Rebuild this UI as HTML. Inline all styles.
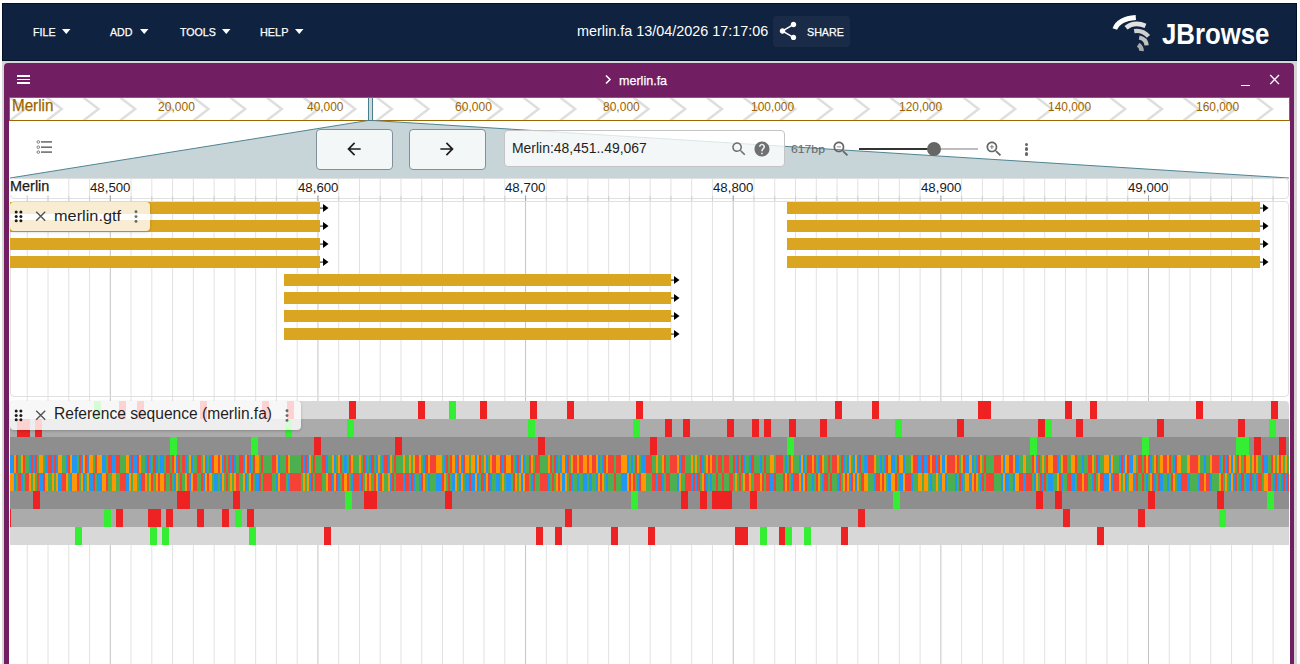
<!DOCTYPE html><html><head><meta charset='utf-8'><style>
*{box-sizing:border-box;margin:0;padding:0}
html,body{width:1300px;height:664px;overflow:hidden;background:#fff;font-family:"Liberation Sans", sans-serif;position:relative}
.a{position:absolute}
.t{position:absolute;white-space:nowrap;line-height:1}
</style></head><body>
<div class="a" style="left:2px;top:3px;width:1295px;height:661px;background:#d6d6d6"></div>
<div class="a" style="left:2px;top:3px;width:1295px;height:58px;background:#0f2340;border:1px solid #03122c"></div>
<div class="t" style="left:32.94px;top:27px;font-size:11.2px;color:#fff;transform:scaleX(0.9557);transform-origin:0 0;-webkit-text-stroke:0.25px currentColor;">FILE</div>
<div class="t" style="left:109.90px;top:27px;font-size:11.2px;color:#fff;transform:scaleX(0.9532);transform-origin:0 0;-webkit-text-stroke:0.25px currentColor;">ADD</div>
<div class="t" style="left:180.09px;top:27px;font-size:11.2px;color:#fff;transform:scaleX(0.9497);transform-origin:0 0;-webkit-text-stroke:0.25px currentColor;">TOOLS</div>
<div class="t" style="left:260.03px;top:27px;font-size:11.2px;color:#fff;transform:scaleX(0.9717);transform-origin:0 0;-webkit-text-stroke:0.25px currentColor;">HELP</div>
<svg class="a" style="left:62px;top:28.5px" width="9" height="6"><path d="M0 0L8.5 0L4.25 5z" fill="#fff"/></svg>
<svg class="a" style="left:139.5px;top:28.5px" width="9" height="6"><path d="M0 0L8.5 0L4.25 5z" fill="#fff"/></svg>
<svg class="a" style="left:222.2px;top:28.5px" width="9" height="6"><path d="M0 0L8.5 0L4.25 5z" fill="#fff"/></svg>
<svg class="a" style="left:295.4px;top:28.5px" width="9" height="6"><path d="M0 0L8.5 0L4.25 5z" fill="#fff"/></svg>
<div class="t" style="left:576.79px;top:24px;font-size:14.8px;color:#fff;transform:scaleX(0.9727);transform-origin:0 0;">merlin.fa 13/04/2026 17:17:06</div>
<div class="a" style="left:773px;top:16px;width:77px;height:31px;background:#1a2b48;border-radius:4px"></div>
<svg class="a" style="left:777px;top:20px" width="22" height="22" viewBox="0 0 24 24"><path fill="#fff" d="M18 16.08c-.76 0-1.44.3-1.96.77L8.91 12.7c.05-.23.09-.46.09-.7s-.04-.47-.09-.7l7.05-4.11c.54.5 1.25.81 2.04.81 1.66 0 3-1.34 3-3s-1.34-3-3-3-3 1.34-3 3c0 .24.04.47.09.7L8.04 9.81C7.5 9.31 6.79 9 6 9c-1.66 0-3 1.34-3 3s1.34 3 3 3c.79 0 1.5-.31 2.04-.81l7.12 4.16c-.05.21-.08.43-.08.65 0 1.61 1.31 2.92 2.92 2.92 1.61 0 2.92-1.31 2.92-2.92s-1.31-2.92-2.92-2.92z"/></svg>
<div class="t" style="left:807.36px;top:27px;font-size:11.2px;color:#fff;transform:scaleX(0.9566);transform-origin:0 0;-webkit-text-stroke:0.25px currentColor;">SHARE</div>
<svg class="a" style="left:1105px;top:10px" width="60" height="45" viewBox="1105 10 60 45"><path d="M1114.8 29Q1118.7 18.75 1135.8 17.5" stroke="#fff" stroke-width="4.8" fill="none"/><path d="M1126 27.8Q1134.25 21.2 1145.5 25.8" stroke="#e2e2e2" stroke-width="4.6" fill="none"/><path d="M1134.2 31.1Q1142.6 29.7 1148.5 36.4" stroke="#d0d0d0" stroke-width="4.2" fill="none"/><path d="M1139.2 37.5Q1146.1 38.65 1146.6 45.4" stroke="#c2c2c2" stroke-width="4.3" fill="none"/><path d="M1138.2 44.7Q1141.75 47.2 1141.5 51" stroke="#a8a8a8" stroke-width="4.5" fill="none"/></svg>
<div class="t" style="left:1161.98px;top:19px;font-size:29.3px;color:#fff;font-weight:bold;transform:scaleX(0.8794);transform-origin:0 0;">JBrowse</div>
<div class="a" style="left:4px;top:63px;width:1290px;height:610px;background:#721e63;border-radius:4px 4px 0 0"></div>
<div class="a" style="left:17px;top:75.15px;width:13px;height:1.5px;background:#fff"></div>
<div class="a" style="left:17px;top:78.75px;width:13px;height:1.5px;background:#fff"></div>
<div class="a" style="left:17px;top:82.35px;width:13px;height:1.5px;background:#fff"></div>
<svg class="a" style="left:604px;top:74px" width="9" height="11" viewBox="0 0 9 11"><path d="M2 1.5L6 5.5L2 9.5" stroke="#fff" stroke-width="1.6" fill="none"/></svg>
<div class="t" style="left:618.52px;top:74px;font-size:13.6px;color:#fff;transform:scaleX(0.9225);transform-origin:0 0;-webkit-text-stroke:0.25px currentColor;">merlin.fa</div>
<div class="a" style="left:1241px;top:84.7px;width:9px;height:1.6px;background:#fff"></div>
<svg class="a" style="left:1268px;top:73px" width="13" height="13" viewBox="0 0 13 13"><path d="M2.2 2L11 11.1M11 2L2.2 11.1" stroke="#fff" stroke-width="1.35"/></svg>
<div class="a" style="left:9px;top:121px;width:1281px;height:560px;background:#fff"></div>
<svg class="a" style="left:9px;top:97px" width="1281" height="24" viewBox="9 97 1281 24"><rect x="9" y="97" width="1281" height="24" fill="#fff"/><path d="M-26.5 97.5L-11.5 109L-26.5 120.5" stroke="#dedede" stroke-width="2.5" fill="none"/><path d="M10.1 97.5L25.1 109L10.1 120.5" stroke="#dedede" stroke-width="2.5" fill="none"/><path d="M46.8 97.5L61.8 109L46.8 120.5" stroke="#dedede" stroke-width="2.5" fill="none"/><path d="M83.5 97.5L98.5 109L83.5 120.5" stroke="#dedede" stroke-width="2.5" fill="none"/><path d="M120.2 97.5L135.2 109L120.2 120.5" stroke="#dedede" stroke-width="2.5" fill="none"/><path d="M156.8 97.5L171.8 109L156.8 120.5" stroke="#dedede" stroke-width="2.5" fill="none"/><path d="M193.5 97.5L208.5 109L193.5 120.5" stroke="#dedede" stroke-width="2.5" fill="none"/><path d="M230.2 97.5L245.2 109L230.2 120.5" stroke="#dedede" stroke-width="2.5" fill="none"/><path d="M266.8 97.5L281.8 109L266.8 120.5" stroke="#dedede" stroke-width="2.5" fill="none"/><path d="M303.5 97.5L318.5 109L303.5 120.5" stroke="#dedede" stroke-width="2.5" fill="none"/><path d="M340.2 97.5L355.2 109L340.2 120.5" stroke="#dedede" stroke-width="2.5" fill="none"/><path d="M376.9 97.5L391.9 109L376.9 120.5" stroke="#dedede" stroke-width="2.5" fill="none"/><path d="M413.5 97.5L428.5 109L413.5 120.5" stroke="#dedede" stroke-width="2.5" fill="none"/><path d="M450.2 97.5L465.2 109L450.2 120.5" stroke="#dedede" stroke-width="2.5" fill="none"/><path d="M486.9 97.5L501.9 109L486.9 120.5" stroke="#dedede" stroke-width="2.5" fill="none"/><path d="M523.5 97.5L538.5 109L523.5 120.5" stroke="#dedede" stroke-width="2.5" fill="none"/><path d="M560.2 97.5L575.2 109L560.2 120.5" stroke="#dedede" stroke-width="2.5" fill="none"/><path d="M596.9 97.5L611.9 109L596.9 120.5" stroke="#dedede" stroke-width="2.5" fill="none"/><path d="M633.5 97.5L648.5 109L633.5 120.5" stroke="#dedede" stroke-width="2.5" fill="none"/><path d="M670.2 97.5L685.2 109L670.2 120.5" stroke="#dedede" stroke-width="2.5" fill="none"/><path d="M706.9 97.5L721.9 109L706.9 120.5" stroke="#dedede" stroke-width="2.5" fill="none"/><path d="M743.6 97.5L758.6 109L743.6 120.5" stroke="#dedede" stroke-width="2.5" fill="none"/><path d="M780.2 97.5L795.2 109L780.2 120.5" stroke="#dedede" stroke-width="2.5" fill="none"/><path d="M816.9 97.5L831.9 109L816.9 120.5" stroke="#dedede" stroke-width="2.5" fill="none"/><path d="M853.6 97.5L868.6 109L853.6 120.5" stroke="#dedede" stroke-width="2.5" fill="none"/><path d="M890.2 97.5L905.2 109L890.2 120.5" stroke="#dedede" stroke-width="2.5" fill="none"/><path d="M926.9 97.5L941.9 109L926.9 120.5" stroke="#dedede" stroke-width="2.5" fill="none"/><path d="M963.6 97.5L978.6 109L963.6 120.5" stroke="#dedede" stroke-width="2.5" fill="none"/><path d="M1000.2 97.5L1015.2 109L1000.2 120.5" stroke="#dedede" stroke-width="2.5" fill="none"/><path d="M1036.9 97.5L1051.9 109L1036.9 120.5" stroke="#dedede" stroke-width="2.5" fill="none"/><path d="M1073.6 97.5L1088.6 109L1073.6 120.5" stroke="#dedede" stroke-width="2.5" fill="none"/><path d="M1110.2 97.5L1125.2 109L1110.2 120.5" stroke="#dedede" stroke-width="2.5" fill="none"/><path d="M1146.9 97.5L1161.9 109L1146.9 120.5" stroke="#dedede" stroke-width="2.5" fill="none"/><path d="M1183.6 97.5L1198.6 109L1183.6 120.5" stroke="#dedede" stroke-width="2.5" fill="none"/><path d="M1220.3 97.5L1235.3 109L1220.3 120.5" stroke="#dedede" stroke-width="2.5" fill="none"/><path d="M1256.9 97.5L1271.9 109L1256.9 120.5" stroke="#dedede" stroke-width="2.5" fill="none"/><rect x="9.5" y="97.5" width="1280" height="23" fill="none" stroke="#9e6600" stroke-width="1"/></svg>
<div class="t" style="left:11.88px;top:98px;font-size:16px;color:#9c6400;transform:scaleX(0.9496);transform-origin:0 0;-webkit-text-stroke:0.25px currentColor;">Merlin</div>
<div class="t" style="left:158.19px;top:101px;font-size:12.3px;color:#9c6400;transform:scaleX(0.9800);transform-origin:0 0;">20,000</div>
<div class="t" style="left:306.84px;top:101px;font-size:12.3px;color:#9c6400;transform:scaleX(0.9702);transform-origin:0 0;">40,000</div>
<div class="t" style="left:454.77px;top:101px;font-size:12.3px;color:#9c6400;transform:scaleX(0.9800);transform-origin:0 0;">60,000</div>
<div class="t" style="left:603.18px;top:101px;font-size:12.3px;color:#9c6400;transform:scaleX(0.9767);transform-origin:0 0;">80,000</div>
<div class="t" style="left:751.00px;top:101px;font-size:12.3px;color:#9c6400;transform:scaleX(0.9702);transform-origin:0 0;">100,000</div>
<div class="t" style="left:899.29px;top:101px;font-size:12.3px;color:#9c6400;transform:scaleX(0.9702);transform-origin:0 0;">120,000</div>
<div class="t" style="left:1047.58px;top:101px;font-size:12.3px;color:#9c6400;transform:scaleX(0.9702);transform-origin:0 0;">140,000</div>
<div class="t" style="left:1195.87px;top:101px;font-size:12.3px;color:#9c6400;transform:scaleX(0.9702);transform-origin:0 0;">160,000</div>
<svg class="a" style="left:0;top:0" width="1300" height="200"><path d="M368 120.5L373 120.5L1289 178L10 178Z" fill="#c7d4d8"/><path d="M10 178L368 120.5M373 120.5L1289 178" stroke="#4f8591" stroke-width="1" fill="none"/><rect x="368.5" y="97.5" width="4" height="23" fill="#cdd9dc" stroke="#4a7e89" stroke-width="1"/></svg>
<svg class="a" style="left:36px;top:139px" width="18" height="16" viewBox="36 139 18 16"><circle cx="38.3" cy="141.9" r="1.3" fill="none" stroke="#707070" stroke-width="0.9"/><rect x="41" y="141.1" width="11" height="1.6" fill="#707070"/><circle cx="38.3" cy="147.2" r="1.3" fill="none" stroke="#707070" stroke-width="0.9"/><rect x="41" y="146.39999999999998" width="11" height="1.6" fill="#707070"/><circle cx="38.3" cy="152.1" r="1.3" fill="none" stroke="#707070" stroke-width="0.9"/><rect x="41" y="151.29999999999998" width="11" height="1.6" fill="#707070"/></svg>
<div class="a" style="left:316px;top:129px;width:77px;height:41px;background:rgba(255,255,255,0.8);border:1px solid #7f909a;border-radius:4px"></div>
<svg class="a" style="left:343.6px;top:138.8px" width="20" height="20" viewBox="0 0 24 24"><path d="M20 11H7.83l5.59-5.59L12 4l-8 8 8 8 1.41-1.41L7.83 13H20v-2z" fill="#1e1e1e"/></svg>
<div class="a" style="left:409px;top:129px;width:77px;height:41px;background:rgba(255,255,255,0.8);border:1px solid #7f909a;border-radius:4px"></div>
<svg class="a" style="left:436.6px;top:138.8px" width="20" height="20" viewBox="0 0 24 24"><path d="M12 4l-1.41 1.41L16.17 11H4v2h12.17l-5.58 5.59L12 20l8-8z" fill="#1e1e1e"/></svg>
<div class="a" style="left:503.5px;top:129.5px;width:281.5px;height:37px;background:rgba(255,255,255,0.8);border:1px solid #c4c4c4;border-radius:4px"></div>
<div class="t" style="left:511.88px;top:140px;font-size:15.4px;color:#1f1f1f;transform:scaleX(0.9057);transform-origin:0 0;">Merlin:48,451..49,067</div>
<svg class="a" style="left:730px;top:140px" width="18" height="18" viewBox="0 0 24 24"><path fill="#707070" d="M15.5 14h-.79l-.28-.27C15.41 12.59 16 11.11 16 9.5 16 5.91 13.09 3 9.5 3S3 5.91 3 9.5 5.91 16 9.5 16c1.61 0 3.09-.59 4.23-1.57l.27.28v.79l5 4.99L20.49 19l-4.99-5zm-6 0C7.01 14 5 11.99 5 9.5S7.01 5 9.5 5 14 7.01 14 9.5 11.99 14 9.5 14z"/></svg>
<svg class="a" style="left:753px;top:139.5px" width="18" height="18" viewBox="0 0 24 24"><path fill="#707070" d="M12 2C6.48 2 2 6.48 2 12s4.48 10 10 10 10-4.48 10-10S17.52 2 12 2zm1 17h-2v-2h2v2zm2.07-7.75l-.9.92C13.45 12.9 13 13.5 13 15h-2v-.5c0-1.1.45-2.1 1.17-2.83l1.24-1.26c.37-.36.59-.86.59-1.41 0-1.1-.9-2-2-2s-2 .9-2 2H8c0-2.21 1.79-4 4-4s4 1.79 4 4c0 .88-.36 1.68-.93 2.25z"/></svg>
<div class="t" style="left:790.99px;top:144px;font-size:11.5px;color:#666;transform:scaleX(1.0603);transform-origin:0 0;">617bp</div>
<svg class="a" style="left:831px;top:138.5px" width="20" height="20" viewBox="0 0 24 24"><path fill="#666" d="M15.5 14h-.79l-.28-.27C15.41 12.59 16 11.11 16 9.5 16 5.91 13.09 3 9.5 3S3 5.91 3 9.5 5.91 16 9.5 16c1.61 0 3.09-.59 4.23-1.57l.27.28v.79l5 4.99L20.49 19l-4.99-5zm-6 0C7.01 14 5 11.99 5 9.5S7.01 5 9.5 5 14 7.01 14 9.5 11.99 14 9.5 14zM7 9h5v1H7z"/></svg>
<svg class="a" style="left:984px;top:139px" width="20" height="20" viewBox="0 0 24 24"><path fill="#666" d="M15.5 14h-.79l-.28-.27C15.41 12.59 16 11.11 16 9.5 16 5.91 13.09 3 9.5 3S3 5.91 3 9.5 5.91 16 9.5 16c1.61 0 3.09-.59 4.23-1.57l.27.28v.79l5 4.99L20.49 19l-4.99-5zm-6 0C7.01 14 5 11.99 5 9.5S7.01 5 9.5 5 14 7.01 14 9.5 11.99 14 9.5 14zm.5-7H9v2H7v1h2v2h1v-2h2V9h-2z"/></svg>
<div class="a" style="left:858.5px;top:148px;width:119px;height:2px;background:#bdbdbd"></div>
<div class="a" style="left:858.5px;top:148px;width:75px;height:2px;background:#333"></div>
<div class="a" style="left:926.8px;top:142px;width:14px;height:14px;background:#666;border-radius:50%"></div>
<div class="a" style="left:1024.8px;top:142.5px;width:3.4px;height:3.4px;background:#666;border-radius:50%"></div>
<div class="a" style="left:1024.8px;top:147.3px;width:3.4px;height:3.4px;background:#666;border-radius:50%"></div>
<div class="a" style="left:1024.8px;top:152.3px;width:3.4px;height:3.4px;background:#666;border-radius:50%"></div>
<svg class="a" style="left:0;top:0" width="1300" height="664"><rect x="26.74" y="179" width="1" height="485" fill="#e2e2e2"/><rect x="47.51" y="179" width="1" height="485" fill="#e2e2e2"/><rect x="68.27" y="179" width="1" height="485" fill="#e2e2e2"/><rect x="89.04" y="179" width="1" height="485" fill="#e2e2e2"/><rect x="109.80" y="179" width="1" height="485" fill="#c4c4c4"/><rect x="130.56" y="179" width="1" height="485" fill="#e2e2e2"/><rect x="151.33" y="179" width="1" height="485" fill="#e2e2e2"/><rect x="172.09" y="179" width="1" height="485" fill="#e2e2e2"/><rect x="192.86" y="179" width="1" height="485" fill="#e2e2e2"/><rect x="213.62" y="179" width="1" height="485" fill="#e2e2e2"/><rect x="234.38" y="179" width="1" height="485" fill="#e2e2e2"/><rect x="255.15" y="179" width="1" height="485" fill="#e2e2e2"/><rect x="275.91" y="179" width="1" height="485" fill="#e2e2e2"/><rect x="296.68" y="179" width="1" height="485" fill="#e2e2e2"/><rect x="317.44" y="179" width="1" height="485" fill="#c4c4c4"/><rect x="338.20" y="179" width="1" height="485" fill="#e2e2e2"/><rect x="358.97" y="179" width="1" height="485" fill="#e2e2e2"/><rect x="379.73" y="179" width="1" height="485" fill="#e2e2e2"/><rect x="400.50" y="179" width="1" height="485" fill="#e2e2e2"/><rect x="421.26" y="179" width="1" height="485" fill="#e2e2e2"/><rect x="442.02" y="179" width="1" height="485" fill="#e2e2e2"/><rect x="462.79" y="179" width="1" height="485" fill="#e2e2e2"/><rect x="483.55" y="179" width="1" height="485" fill="#e2e2e2"/><rect x="504.32" y="179" width="1" height="485" fill="#e2e2e2"/><rect x="525.08" y="179" width="1" height="485" fill="#c4c4c4"/><rect x="545.84" y="179" width="1" height="485" fill="#e2e2e2"/><rect x="566.61" y="179" width="1" height="485" fill="#e2e2e2"/><rect x="587.37" y="179" width="1" height="485" fill="#e2e2e2"/><rect x="608.14" y="179" width="1" height="485" fill="#e2e2e2"/><rect x="628.90" y="179" width="1" height="485" fill="#e2e2e2"/><rect x="649.66" y="179" width="1" height="485" fill="#e2e2e2"/><rect x="670.43" y="179" width="1" height="485" fill="#e2e2e2"/><rect x="691.19" y="179" width="1" height="485" fill="#e2e2e2"/><rect x="711.96" y="179" width="1" height="485" fill="#e2e2e2"/><rect x="732.72" y="179" width="1" height="485" fill="#c4c4c4"/><rect x="753.48" y="179" width="1" height="485" fill="#e2e2e2"/><rect x="774.25" y="179" width="1" height="485" fill="#e2e2e2"/><rect x="795.01" y="179" width="1" height="485" fill="#e2e2e2"/><rect x="815.78" y="179" width="1" height="485" fill="#e2e2e2"/><rect x="836.54" y="179" width="1" height="485" fill="#e2e2e2"/><rect x="857.30" y="179" width="1" height="485" fill="#e2e2e2"/><rect x="878.07" y="179" width="1" height="485" fill="#e2e2e2"/><rect x="898.83" y="179" width="1" height="485" fill="#e2e2e2"/><rect x="919.60" y="179" width="1" height="485" fill="#e2e2e2"/><rect x="940.36" y="179" width="1" height="485" fill="#c4c4c4"/><rect x="961.12" y="179" width="1" height="485" fill="#e2e2e2"/><rect x="981.89" y="179" width="1" height="485" fill="#e2e2e2"/><rect x="1002.65" y="179" width="1" height="485" fill="#e2e2e2"/><rect x="1023.42" y="179" width="1" height="485" fill="#e2e2e2"/><rect x="1044.18" y="179" width="1" height="485" fill="#e2e2e2"/><rect x="1064.94" y="179" width="1" height="485" fill="#e2e2e2"/><rect x="1085.71" y="179" width="1" height="485" fill="#e2e2e2"/><rect x="1106.47" y="179" width="1" height="485" fill="#e2e2e2"/><rect x="1127.24" y="179" width="1" height="485" fill="#e2e2e2"/><rect x="1148.00" y="179" width="1" height="485" fill="#c4c4c4"/><rect x="1168.76" y="179" width="1" height="485" fill="#e2e2e2"/><rect x="1189.53" y="179" width="1" height="485" fill="#e2e2e2"/><rect x="1210.29" y="179" width="1" height="485" fill="#e2e2e2"/><rect x="1231.06" y="179" width="1" height="485" fill="#e2e2e2"/><rect x="1251.82" y="179" width="1" height="485" fill="#e2e2e2"/><rect x="1272.58" y="179" width="1" height="485" fill="#e2e2e2"/></svg>
<div class="a" style="left:10px;top:178px;width:1279px;height:21px;border:1px solid #e0e0e0;border-radius:4px"></div>
<div class="a" style="left:10px;top:179px;width:40px;height:16px;background:#fff"></div>
<div class="t" style="left:9.64px;top:180px;font-size:13.9px;color:#1a1a1a;transform:scaleX(1.0401);transform-origin:0 0;-webkit-text-stroke:0.25px currentColor;">Merlin</div>
<div class="t" style="left:90.7px;top:179px;width:39.2px;height:16px;background:#fff"></div>
<div class="t" style="left:90.19px;top:182px;font-size:12.6px;color:#1a1a1a;transform:scaleX(1.0503);transform-origin:0 0;">48,500</div>
<div class="t" style="left:298.3px;top:179px;width:39.2px;height:16px;background:#fff"></div>
<div class="t" style="left:297.83px;top:182px;font-size:12.6px;color:#1a1a1a;transform:scaleX(1.0503);transform-origin:0 0;">48,600</div>
<div class="t" style="left:506.0px;top:179px;width:39.2px;height:16px;background:#fff"></div>
<div class="t" style="left:505.47px;top:182px;font-size:12.6px;color:#1a1a1a;transform:scaleX(1.0503);transform-origin:0 0;">48,700</div>
<div class="t" style="left:713.6px;top:179px;width:39.2px;height:16px;background:#fff"></div>
<div class="t" style="left:713.11px;top:182px;font-size:12.6px;color:#1a1a1a;transform:scaleX(1.0503);transform-origin:0 0;">48,800</div>
<div class="t" style="left:921.3px;top:179px;width:39.2px;height:16px;background:#fff"></div>
<div class="t" style="left:920.75px;top:182px;font-size:12.6px;color:#1a1a1a;transform:scaleX(1.0503);transform-origin:0 0;">48,900</div>
<div class="t" style="left:1128.9px;top:179px;width:39.2px;height:16px;background:#fff"></div>
<div class="t" style="left:1128.39px;top:182px;font-size:12.6px;color:#1a1a1a;transform:scaleX(1.0503);transform-origin:0 0;">49,000</div>
<svg class="a" style="left:0;top:0" width="1300" height="210"><rect x="26.74" y="196" width="1" height="5.5" fill="#cfcfcf"/><rect x="47.51" y="196" width="1" height="5.5" fill="#cfcfcf"/><rect x="68.27" y="196" width="1" height="5.5" fill="#cfcfcf"/><rect x="89.04" y="196" width="1" height="5.5" fill="#cfcfcf"/><rect x="109.80" y="196" width="1" height="5.5" fill="#a5a5a5"/><rect x="130.56" y="196" width="1" height="5.5" fill="#cfcfcf"/><rect x="151.33" y="196" width="1" height="5.5" fill="#cfcfcf"/><rect x="172.09" y="196" width="1" height="5.5" fill="#cfcfcf"/><rect x="192.86" y="196" width="1" height="5.5" fill="#cfcfcf"/><rect x="213.62" y="196" width="1" height="5.5" fill="#cfcfcf"/><rect x="234.38" y="196" width="1" height="5.5" fill="#cfcfcf"/><rect x="255.15" y="196" width="1" height="5.5" fill="#cfcfcf"/><rect x="275.91" y="196" width="1" height="5.5" fill="#cfcfcf"/><rect x="296.68" y="196" width="1" height="5.5" fill="#cfcfcf"/><rect x="317.44" y="196" width="1" height="5.5" fill="#a5a5a5"/><rect x="338.20" y="196" width="1" height="5.5" fill="#cfcfcf"/><rect x="358.97" y="196" width="1" height="5.5" fill="#cfcfcf"/><rect x="379.73" y="196" width="1" height="5.5" fill="#cfcfcf"/><rect x="400.50" y="196" width="1" height="5.5" fill="#cfcfcf"/><rect x="421.26" y="196" width="1" height="5.5" fill="#cfcfcf"/><rect x="442.02" y="196" width="1" height="5.5" fill="#cfcfcf"/><rect x="462.79" y="196" width="1" height="5.5" fill="#cfcfcf"/><rect x="483.55" y="196" width="1" height="5.5" fill="#cfcfcf"/><rect x="504.32" y="196" width="1" height="5.5" fill="#cfcfcf"/><rect x="525.08" y="196" width="1" height="5.5" fill="#a5a5a5"/><rect x="545.84" y="196" width="1" height="5.5" fill="#cfcfcf"/><rect x="566.61" y="196" width="1" height="5.5" fill="#cfcfcf"/><rect x="587.37" y="196" width="1" height="5.5" fill="#cfcfcf"/><rect x="608.14" y="196" width="1" height="5.5" fill="#cfcfcf"/><rect x="628.90" y="196" width="1" height="5.5" fill="#cfcfcf"/><rect x="649.66" y="196" width="1" height="5.5" fill="#cfcfcf"/><rect x="670.43" y="196" width="1" height="5.5" fill="#cfcfcf"/><rect x="691.19" y="196" width="1" height="5.5" fill="#cfcfcf"/><rect x="711.96" y="196" width="1" height="5.5" fill="#cfcfcf"/><rect x="732.72" y="196" width="1" height="5.5" fill="#a5a5a5"/><rect x="753.48" y="196" width="1" height="5.5" fill="#cfcfcf"/><rect x="774.25" y="196" width="1" height="5.5" fill="#cfcfcf"/><rect x="795.01" y="196" width="1" height="5.5" fill="#cfcfcf"/><rect x="815.78" y="196" width="1" height="5.5" fill="#cfcfcf"/><rect x="836.54" y="196" width="1" height="5.5" fill="#cfcfcf"/><rect x="857.30" y="196" width="1" height="5.5" fill="#cfcfcf"/><rect x="878.07" y="196" width="1" height="5.5" fill="#cfcfcf"/><rect x="898.83" y="196" width="1" height="5.5" fill="#cfcfcf"/><rect x="919.60" y="196" width="1" height="5.5" fill="#cfcfcf"/><rect x="940.36" y="196" width="1" height="5.5" fill="#a5a5a5"/><rect x="961.12" y="196" width="1" height="5.5" fill="#cfcfcf"/><rect x="981.89" y="196" width="1" height="5.5" fill="#cfcfcf"/><rect x="1002.65" y="196" width="1" height="5.5" fill="#cfcfcf"/><rect x="1023.42" y="196" width="1" height="5.5" fill="#cfcfcf"/><rect x="1044.18" y="196" width="1" height="5.5" fill="#cfcfcf"/><rect x="1064.94" y="196" width="1" height="5.5" fill="#cfcfcf"/><rect x="1085.71" y="196" width="1" height="5.5" fill="#cfcfcf"/><rect x="1106.47" y="196" width="1" height="5.5" fill="#cfcfcf"/><rect x="1127.24" y="196" width="1" height="5.5" fill="#cfcfcf"/><rect x="1148.00" y="196" width="1" height="5.5" fill="#a5a5a5"/><rect x="1168.76" y="196" width="1" height="5.5" fill="#cfcfcf"/><rect x="1189.53" y="196" width="1" height="5.5" fill="#cfcfcf"/><rect x="1210.29" y="196" width="1" height="5.5" fill="#cfcfcf"/><rect x="1231.06" y="196" width="1" height="5.5" fill="#cfcfcf"/><rect x="1251.82" y="196" width="1" height="5.5" fill="#cfcfcf"/><rect x="1272.58" y="196" width="1" height="5.5" fill="#cfcfcf"/></svg>
<div class="a" style="left:10px;top:201px;width:1279px;height:195.5px;border:1px solid #e0e0e0;border-radius:4px"></div>
<svg class="a" style="left:0;top:0" width="1300" height="400"><rect x="10" y="202" width="310" height="12" fill="#daa520"/><rect x="320" y="207.5" width="3.5" height="1.2" fill="#444"/><path d="M323 204L328.5 208L323 212Z" fill="#000"/><rect x="787" y="202" width="473" height="12" fill="#daa520"/><rect x="1260" y="207.5" width="3.5" height="1.2" fill="#444"/><path d="M1263 204L1268.5 208L1263 212Z" fill="#000"/><rect x="10" y="220" width="310" height="12" fill="#daa520"/><rect x="320" y="225.5" width="3.5" height="1.2" fill="#444"/><path d="M323 222L328.5 226L323 230Z" fill="#000"/><rect x="787" y="220" width="473" height="12" fill="#daa520"/><rect x="1260" y="225.5" width="3.5" height="1.2" fill="#444"/><path d="M1263 222L1268.5 226L1263 230Z" fill="#000"/><rect x="10" y="238" width="310" height="12" fill="#daa520"/><rect x="320" y="243.5" width="3.5" height="1.2" fill="#444"/><path d="M323 240L328.5 244L323 248Z" fill="#000"/><rect x="787" y="238" width="473" height="12" fill="#daa520"/><rect x="1260" y="243.5" width="3.5" height="1.2" fill="#444"/><path d="M1263 240L1268.5 244L1263 248Z" fill="#000"/><rect x="10" y="256" width="310" height="12" fill="#daa520"/><rect x="320" y="261.5" width="3.5" height="1.2" fill="#444"/><path d="M323 258L328.5 262L323 266Z" fill="#000"/><rect x="787" y="256" width="473" height="12" fill="#daa520"/><rect x="1260" y="261.5" width="3.5" height="1.2" fill="#444"/><path d="M1263 258L1268.5 262L1263 266Z" fill="#000"/><rect x="284" y="274" width="387" height="12" fill="#daa520"/><rect x="671" y="279.5" width="3.5" height="1.2" fill="#444"/><path d="M674 276L679.5 280L674 284Z" fill="#000"/><rect x="284" y="292" width="387" height="12" fill="#daa520"/><rect x="671" y="297.5" width="3.5" height="1.2" fill="#444"/><path d="M674 294L679.5 298L674 302Z" fill="#000"/><rect x="284" y="310" width="387" height="12" fill="#daa520"/><rect x="671" y="315.5" width="3.5" height="1.2" fill="#444"/><path d="M674 312L679.5 316L674 320Z" fill="#000"/><rect x="284" y="328" width="387" height="12" fill="#daa520"/><rect x="671" y="333.5" width="3.5" height="1.2" fill="#444"/><path d="M674 330L679.5 334L674 338Z" fill="#000"/></svg>
<div class="a" style="left:10px;top:202px;width:140px;height:29px;background:rgba(255,255,255,0.8);border-radius:4px;box-shadow:0 1px 3px rgba(0,0,0,0.2)"></div>
<div class="a" style="left:10px;top:401px;width:1279px;height:144px;overflow:hidden;border-radius:4px 4px 0 0"><svg class="a" style="left:-10px;top:-401px" width="1300" height="560" shape-rendering="crispEdges"><rect x="0" y="401" width="1300" height="18" fill="#d8d8d8"/><rect x="0" y="419" width="1300" height="18" fill="#ababab"/><rect x="0" y="437" width="1300" height="18" fill="#8e8e8e"/><rect x="0" y="491" width="1300" height="18" fill="#8e8e8e"/><rect x="0" y="509" width="1300" height="18" fill="#ababab"/><rect x="0" y="527" width="1300" height="18" fill="#d8d8d8"/><rect x="94" y="401" width="7" height="18" fill="#33ee33"/><rect x="119" y="401" width="7" height="18" fill="#ee2222"/><rect x="137" y="401" width="7" height="18" fill="#ee2222"/><rect x="200" y="401" width="7" height="18" fill="#ee2222"/><rect x="262" y="401" width="7" height="18" fill="#ee2222"/><rect x="287" y="401" width="7" height="18" fill="#ee2222"/><rect x="349" y="401" width="7" height="18" fill="#ee2222"/><rect x="418" y="401" width="7" height="18" fill="#ee2222"/><rect x="449" y="401" width="7" height="18" fill="#33ee33"/><rect x="480" y="401" width="7" height="18" fill="#ee2222"/><rect x="530" y="401" width="7" height="18" fill="#ee2222"/><rect x="567" y="401" width="7" height="18" fill="#ee2222"/><rect x="636" y="401" width="7" height="18" fill="#ee2222"/><rect x="835" y="401" width="7" height="18" fill="#ee2222"/><rect x="872" y="401" width="7" height="18" fill="#ee2222"/><rect x="978" y="401" width="7" height="18" fill="#ee2222"/><rect x="984" y="401" width="7" height="18" fill="#ee2222"/><rect x="1065" y="401" width="7" height="18" fill="#ee2222"/><rect x="1090" y="401" width="7" height="18" fill="#ee2222"/><rect x="1196" y="401" width="7" height="18" fill="#ee2222"/><rect x="1271" y="401" width="7" height="18" fill="#ee2222"/><rect x="17" y="419" width="7" height="18" fill="#ee2222"/><rect x="23" y="419" width="7" height="18" fill="#ee2222"/><rect x="35" y="419" width="7" height="18" fill="#ee2222"/><rect x="285" y="419" width="7" height="18" fill="#33ee33"/><rect x="347" y="419" width="7" height="18" fill="#33ee33"/><rect x="528" y="419" width="7" height="18" fill="#33ee33"/><rect x="633" y="419" width="7" height="18" fill="#33ee33"/><rect x="665" y="419" width="7" height="18" fill="#ee2222"/><rect x="683" y="419" width="7" height="18" fill="#ee2222"/><rect x="727" y="419" width="7" height="18" fill="#ee2222"/><rect x="752" y="419" width="7" height="18" fill="#ee2222"/><rect x="764" y="419" width="7" height="18" fill="#ee2222"/><rect x="789" y="419" width="7" height="18" fill="#ee2222"/><rect x="820" y="419" width="7" height="18" fill="#ee2222"/><rect x="895" y="419" width="7" height="18" fill="#33ee33"/><rect x="957" y="419" width="7" height="18" fill="#ee2222"/><rect x="1038" y="419" width="7" height="18" fill="#ee2222"/><rect x="1045" y="419" width="7" height="18" fill="#33ee33"/><rect x="1076" y="419" width="7" height="18" fill="#ee2222"/><rect x="1157" y="419" width="7" height="18" fill="#ee2222"/><rect x="1238" y="419" width="7" height="18" fill="#ee2222"/><rect x="1269" y="419" width="7" height="18" fill="#33ee33"/><rect x="170" y="437" width="7" height="18" fill="#33ee33"/><rect x="251" y="437" width="7" height="18" fill="#33ee33"/><rect x="314" y="437" width="7" height="18" fill="#ee2222"/><rect x="395" y="437" width="7" height="18" fill="#ee2222"/><rect x="538" y="437" width="7" height="18" fill="#ee2222"/><rect x="650" y="437" width="7" height="18" fill="#ee2222"/><rect x="787" y="437" width="7" height="18" fill="#33ee33"/><rect x="1030" y="437" width="7" height="18" fill="#33ee33"/><rect x="1142" y="437" width="7" height="18" fill="#33ee33"/><rect x="1236" y="437" width="7" height="18" fill="#33ee33"/><rect x="1242" y="437" width="7" height="18" fill="#33ee33"/><rect x="1254" y="437" width="7" height="18" fill="#ee2222"/><rect x="1279" y="437" width="7" height="18" fill="#ee2222"/><rect x="33" y="491" width="7" height="18" fill="#ee2222"/><rect x="177" y="491" width="7" height="18" fill="#ee2222"/><rect x="183" y="491" width="7" height="18" fill="#ee2222"/><rect x="233" y="491" width="7" height="18" fill="#ee2222"/><rect x="345" y="491" width="7" height="18" fill="#33ee33"/><rect x="364" y="491" width="7" height="18" fill="#ee2222"/><rect x="370" y="491" width="7" height="18" fill="#ee2222"/><rect x="445" y="491" width="7" height="18" fill="#ee2222"/><rect x="631" y="491" width="7" height="18" fill="#33ee33"/><rect x="681" y="491" width="7" height="18" fill="#ee2222"/><rect x="700" y="491" width="7" height="18" fill="#ee2222"/><rect x="712" y="491" width="7" height="18" fill="#ee2222"/><rect x="719" y="491" width="7" height="18" fill="#ee2222"/><rect x="725" y="491" width="7" height="18" fill="#ee2222"/><rect x="750" y="491" width="7" height="18" fill="#ee2222"/><rect x="893" y="491" width="7" height="18" fill="#33ee33"/><rect x="1036" y="491" width="7" height="18" fill="#ee2222"/><rect x="1055" y="491" width="7" height="18" fill="#ee2222"/><rect x="1148" y="491" width="7" height="18" fill="#ee2222"/><rect x="1217" y="491" width="7" height="18" fill="#ee2222"/><rect x="1267" y="491" width="7" height="18" fill="#33ee33"/><rect x="10" y="509" width="1" height="18" fill="#ee2222"/><rect x="104" y="509" width="7" height="18" fill="#33ee33"/><rect x="116" y="509" width="7" height="18" fill="#ee2222"/><rect x="148" y="509" width="7" height="18" fill="#ee2222"/><rect x="154" y="509" width="7" height="18" fill="#ee2222"/><rect x="166" y="509" width="7" height="18" fill="#ee2222"/><rect x="197" y="509" width="7" height="18" fill="#ee2222"/><rect x="222" y="509" width="7" height="18" fill="#ee2222"/><rect x="235" y="509" width="7" height="18" fill="#33ee33"/><rect x="247" y="509" width="7" height="18" fill="#ee2222"/><rect x="565" y="509" width="7" height="18" fill="#ee2222"/><rect x="858" y="509" width="7" height="18" fill="#ee2222"/><rect x="1063" y="509" width="7" height="18" fill="#ee2222"/><rect x="1138" y="509" width="7" height="18" fill="#ee2222"/><rect x="1219" y="509" width="7" height="18" fill="#33ee33"/><rect x="75" y="527" width="7" height="18" fill="#33ee33"/><rect x="150" y="527" width="7" height="18" fill="#33ee33"/><rect x="162" y="527" width="7" height="18" fill="#33ee33"/><rect x="249" y="527" width="7" height="18" fill="#33ee33"/><rect x="324" y="527" width="7" height="18" fill="#ee2222"/><rect x="536" y="527" width="7" height="18" fill="#ee2222"/><rect x="555" y="527" width="7" height="18" fill="#ee2222"/><rect x="611" y="527" width="7" height="18" fill="#ee2222"/><rect x="648" y="527" width="7" height="18" fill="#ee2222"/><rect x="735" y="527" width="7" height="18" fill="#ee2222"/><rect x="741" y="527" width="7" height="18" fill="#ee2222"/><rect x="760" y="527" width="7" height="18" fill="#33ee33"/><rect x="779" y="527" width="7" height="18" fill="#ee2222"/><rect x="785" y="527" width="7" height="18" fill="#33ee33"/><rect x="804" y="527" width="7" height="18" fill="#33ee33"/><rect x="841" y="527" width="7" height="18" fill="#ee2222"/><rect x="1097" y="527" width="7" height="18" fill="#ee2222"/><rect x="10" y="455" width="2" height="18" fill="#2196f3"/><rect x="10" y="473" width="2" height="18" fill="#ff9800"/><rect x="12" y="455" width="2" height="18" fill="#2196f3"/><rect x="12" y="473" width="2" height="18" fill="#ff9800"/><rect x="14" y="455" width="2" height="18" fill="#ff9800"/><rect x="14" y="473" width="2" height="18" fill="#2196f3"/><rect x="16" y="455" width="2" height="18" fill="#f44336"/><rect x="16" y="473" width="2" height="18" fill="#4caf50"/><rect x="18" y="455" width="3" height="18" fill="#4caf50"/><rect x="18" y="473" width="3" height="18" fill="#f44336"/><rect x="21" y="455" width="2" height="18" fill="#ff9800"/><rect x="21" y="473" width="2" height="18" fill="#2196f3"/><rect x="23" y="455" width="2" height="18" fill="#f44336"/><rect x="23" y="473" width="2" height="18" fill="#4caf50"/><rect x="25" y="455" width="2" height="18" fill="#4caf50"/><rect x="25" y="473" width="2" height="18" fill="#f44336"/><rect x="27" y="455" width="2" height="18" fill="#4caf50"/><rect x="27" y="473" width="2" height="18" fill="#f44336"/><rect x="29" y="455" width="2" height="18" fill="#2196f3"/><rect x="29" y="473" width="2" height="18" fill="#ff9800"/><rect x="31" y="455" width="2" height="18" fill="#f44336"/><rect x="31" y="473" width="2" height="18" fill="#4caf50"/><rect x="33" y="455" width="2" height="18" fill="#2196f3"/><rect x="33" y="473" width="2" height="18" fill="#ff9800"/><rect x="35" y="455" width="2" height="18" fill="#f44336"/><rect x="35" y="473" width="2" height="18" fill="#4caf50"/><rect x="37" y="455" width="2" height="18" fill="#4caf50"/><rect x="37" y="473" width="2" height="18" fill="#f44336"/><rect x="39" y="455" width="2" height="18" fill="#ff9800"/><rect x="39" y="473" width="2" height="18" fill="#2196f3"/><rect x="41" y="455" width="2" height="18" fill="#ff9800"/><rect x="41" y="473" width="2" height="18" fill="#2196f3"/><rect x="43" y="455" width="2" height="18" fill="#4caf50"/><rect x="43" y="473" width="2" height="18" fill="#f44336"/><rect x="45" y="455" width="3" height="18" fill="#2196f3"/><rect x="45" y="473" width="3" height="18" fill="#ff9800"/><rect x="48" y="455" width="2" height="18" fill="#f44336"/><rect x="48" y="473" width="2" height="18" fill="#4caf50"/><rect x="50" y="455" width="2" height="18" fill="#f44336"/><rect x="50" y="473" width="2" height="18" fill="#4caf50"/><rect x="52" y="455" width="2" height="18" fill="#2196f3"/><rect x="52" y="473" width="2" height="18" fill="#ff9800"/><rect x="54" y="455" width="2" height="18" fill="#f44336"/><rect x="54" y="473" width="2" height="18" fill="#4caf50"/><rect x="56" y="455" width="2" height="18" fill="#2196f3"/><rect x="56" y="473" width="2" height="18" fill="#ff9800"/><rect x="58" y="455" width="2" height="18" fill="#ff9800"/><rect x="58" y="473" width="2" height="18" fill="#2196f3"/><rect x="60" y="455" width="2" height="18" fill="#ff9800"/><rect x="60" y="473" width="2" height="18" fill="#2196f3"/><rect x="62" y="455" width="2" height="18" fill="#4caf50"/><rect x="62" y="473" width="2" height="18" fill="#f44336"/><rect x="64" y="455" width="2" height="18" fill="#4caf50"/><rect x="64" y="473" width="2" height="18" fill="#f44336"/><rect x="66" y="455" width="2" height="18" fill="#2196f3"/><rect x="66" y="473" width="2" height="18" fill="#ff9800"/><rect x="68" y="455" width="2" height="18" fill="#f44336"/><rect x="68" y="473" width="2" height="18" fill="#4caf50"/><rect x="70" y="455" width="2" height="18" fill="#ff9800"/><rect x="70" y="473" width="2" height="18" fill="#2196f3"/><rect x="72" y="455" width="3" height="18" fill="#2196f3"/><rect x="72" y="473" width="3" height="18" fill="#ff9800"/><rect x="75" y="455" width="2" height="18" fill="#2196f3"/><rect x="75" y="473" width="2" height="18" fill="#ff9800"/><rect x="77" y="455" width="2" height="18" fill="#4caf50"/><rect x="77" y="473" width="2" height="18" fill="#f44336"/><rect x="79" y="455" width="2" height="18" fill="#f44336"/><rect x="79" y="473" width="2" height="18" fill="#4caf50"/><rect x="81" y="455" width="2" height="18" fill="#2196f3"/><rect x="81" y="473" width="2" height="18" fill="#ff9800"/><rect x="83" y="455" width="2" height="18" fill="#ff9800"/><rect x="83" y="473" width="2" height="18" fill="#2196f3"/><rect x="85" y="455" width="2" height="18" fill="#f44336"/><rect x="85" y="473" width="2" height="18" fill="#4caf50"/><rect x="87" y="455" width="2" height="18" fill="#2196f3"/><rect x="87" y="473" width="2" height="18" fill="#ff9800"/><rect x="89" y="455" width="2" height="18" fill="#ff9800"/><rect x="89" y="473" width="2" height="18" fill="#2196f3"/><rect x="91" y="455" width="2" height="18" fill="#ff9800"/><rect x="91" y="473" width="2" height="18" fill="#2196f3"/><rect x="93" y="455" width="2" height="18" fill="#4caf50"/><rect x="93" y="473" width="2" height="18" fill="#f44336"/><rect x="95" y="455" width="2" height="18" fill="#f44336"/><rect x="95" y="473" width="2" height="18" fill="#4caf50"/><rect x="97" y="455" width="2" height="18" fill="#ff9800"/><rect x="97" y="473" width="2" height="18" fill="#2196f3"/><rect x="99" y="455" width="3" height="18" fill="#ff9800"/><rect x="99" y="473" width="3" height="18" fill="#2196f3"/><rect x="102" y="455" width="2" height="18" fill="#2196f3"/><rect x="102" y="473" width="2" height="18" fill="#ff9800"/><rect x="104" y="455" width="2" height="18" fill="#2196f3"/><rect x="104" y="473" width="2" height="18" fill="#ff9800"/><rect x="106" y="455" width="2" height="18" fill="#4caf50"/><rect x="106" y="473" width="2" height="18" fill="#f44336"/><rect x="108" y="455" width="2" height="18" fill="#f44336"/><rect x="108" y="473" width="2" height="18" fill="#4caf50"/><rect x="110" y="455" width="2" height="18" fill="#f44336"/><rect x="110" y="473" width="2" height="18" fill="#4caf50"/><rect x="112" y="455" width="2" height="18" fill="#2196f3"/><rect x="112" y="473" width="2" height="18" fill="#ff9800"/><rect x="114" y="455" width="2" height="18" fill="#2196f3"/><rect x="114" y="473" width="2" height="18" fill="#ff9800"/><rect x="116" y="455" width="2" height="18" fill="#f44336"/><rect x="116" y="473" width="2" height="18" fill="#4caf50"/><rect x="118" y="455" width="2" height="18" fill="#f44336"/><rect x="118" y="473" width="2" height="18" fill="#4caf50"/><rect x="120" y="455" width="2" height="18" fill="#4caf50"/><rect x="120" y="473" width="2" height="18" fill="#f44336"/><rect x="122" y="455" width="2" height="18" fill="#4caf50"/><rect x="122" y="473" width="2" height="18" fill="#f44336"/><rect x="124" y="455" width="2" height="18" fill="#4caf50"/><rect x="124" y="473" width="2" height="18" fill="#f44336"/><rect x="126" y="455" width="3" height="18" fill="#ff9800"/><rect x="126" y="473" width="3" height="18" fill="#2196f3"/><rect x="129" y="455" width="2" height="18" fill="#2196f3"/><rect x="129" y="473" width="2" height="18" fill="#ff9800"/><rect x="131" y="455" width="2" height="18" fill="#f44336"/><rect x="131" y="473" width="2" height="18" fill="#4caf50"/><rect x="133" y="455" width="2" height="18" fill="#2196f3"/><rect x="133" y="473" width="2" height="18" fill="#ff9800"/><rect x="135" y="455" width="2" height="18" fill="#2196f3"/><rect x="135" y="473" width="2" height="18" fill="#ff9800"/><rect x="137" y="455" width="2" height="18" fill="#f44336"/><rect x="137" y="473" width="2" height="18" fill="#4caf50"/><rect x="139" y="455" width="2" height="18" fill="#ff9800"/><rect x="139" y="473" width="2" height="18" fill="#2196f3"/><rect x="141" y="455" width="2" height="18" fill="#4caf50"/><rect x="141" y="473" width="2" height="18" fill="#f44336"/><rect x="143" y="455" width="2" height="18" fill="#4caf50"/><rect x="143" y="473" width="2" height="18" fill="#f44336"/><rect x="145" y="455" width="2" height="18" fill="#2196f3"/><rect x="145" y="473" width="2" height="18" fill="#ff9800"/><rect x="147" y="455" width="2" height="18" fill="#f44336"/><rect x="147" y="473" width="2" height="18" fill="#4caf50"/><rect x="149" y="455" width="2" height="18" fill="#2196f3"/><rect x="149" y="473" width="2" height="18" fill="#ff9800"/><rect x="151" y="455" width="2" height="18" fill="#4caf50"/><rect x="151" y="473" width="2" height="18" fill="#f44336"/><rect x="153" y="455" width="3" height="18" fill="#f44336"/><rect x="153" y="473" width="3" height="18" fill="#4caf50"/><rect x="156" y="455" width="2" height="18" fill="#2196f3"/><rect x="156" y="473" width="2" height="18" fill="#ff9800"/><rect x="158" y="455" width="2" height="18" fill="#4caf50"/><rect x="158" y="473" width="2" height="18" fill="#f44336"/><rect x="160" y="455" width="2" height="18" fill="#2196f3"/><rect x="160" y="473" width="2" height="18" fill="#ff9800"/><rect x="162" y="455" width="2" height="18" fill="#2196f3"/><rect x="162" y="473" width="2" height="18" fill="#ff9800"/><rect x="164" y="455" width="2" height="18" fill="#4caf50"/><rect x="164" y="473" width="2" height="18" fill="#f44336"/><rect x="166" y="455" width="2" height="18" fill="#f44336"/><rect x="166" y="473" width="2" height="18" fill="#4caf50"/><rect x="168" y="455" width="2" height="18" fill="#f44336"/><rect x="168" y="473" width="2" height="18" fill="#4caf50"/><rect x="170" y="455" width="2" height="18" fill="#4caf50"/><rect x="170" y="473" width="2" height="18" fill="#f44336"/><rect x="172" y="455" width="2" height="18" fill="#f44336"/><rect x="172" y="473" width="2" height="18" fill="#4caf50"/><rect x="174" y="455" width="2" height="18" fill="#ff9800"/><rect x="174" y="473" width="2" height="18" fill="#2196f3"/><rect x="176" y="455" width="2" height="18" fill="#2196f3"/><rect x="176" y="473" width="2" height="18" fill="#ff9800"/><rect x="178" y="455" width="2" height="18" fill="#f44336"/><rect x="178" y="473" width="2" height="18" fill="#4caf50"/><rect x="180" y="455" width="2" height="18" fill="#4caf50"/><rect x="180" y="473" width="2" height="18" fill="#f44336"/><rect x="182" y="455" width="3" height="18" fill="#f44336"/><rect x="182" y="473" width="3" height="18" fill="#4caf50"/><rect x="185" y="455" width="2" height="18" fill="#2196f3"/><rect x="185" y="473" width="2" height="18" fill="#ff9800"/><rect x="187" y="455" width="2" height="18" fill="#4caf50"/><rect x="187" y="473" width="2" height="18" fill="#f44336"/><rect x="189" y="455" width="2" height="18" fill="#ff9800"/><rect x="189" y="473" width="2" height="18" fill="#2196f3"/><rect x="191" y="455" width="2" height="18" fill="#2196f3"/><rect x="191" y="473" width="2" height="18" fill="#ff9800"/><rect x="193" y="455" width="2" height="18" fill="#4caf50"/><rect x="193" y="473" width="2" height="18" fill="#f44336"/><rect x="195" y="455" width="2" height="18" fill="#4caf50"/><rect x="195" y="473" width="2" height="18" fill="#f44336"/><rect x="197" y="455" width="2" height="18" fill="#f44336"/><rect x="197" y="473" width="2" height="18" fill="#4caf50"/><rect x="199" y="455" width="2" height="18" fill="#f44336"/><rect x="199" y="473" width="2" height="18" fill="#4caf50"/><rect x="201" y="455" width="2" height="18" fill="#4caf50"/><rect x="201" y="473" width="2" height="18" fill="#f44336"/><rect x="203" y="455" width="2" height="18" fill="#ff9800"/><rect x="203" y="473" width="2" height="18" fill="#2196f3"/><rect x="205" y="455" width="2" height="18" fill="#2196f3"/><rect x="205" y="473" width="2" height="18" fill="#ff9800"/><rect x="207" y="455" width="2" height="18" fill="#4caf50"/><rect x="207" y="473" width="2" height="18" fill="#f44336"/><rect x="209" y="455" width="3" height="18" fill="#2196f3"/><rect x="209" y="473" width="3" height="18" fill="#ff9800"/><rect x="212" y="455" width="2" height="18" fill="#f44336"/><rect x="212" y="473" width="2" height="18" fill="#4caf50"/><rect x="214" y="455" width="2" height="18" fill="#ff9800"/><rect x="214" y="473" width="2" height="18" fill="#2196f3"/><rect x="216" y="455" width="2" height="18" fill="#ff9800"/><rect x="216" y="473" width="2" height="18" fill="#2196f3"/><rect x="218" y="455" width="2" height="18" fill="#f44336"/><rect x="218" y="473" width="2" height="18" fill="#4caf50"/><rect x="220" y="455" width="2" height="18" fill="#ff9800"/><rect x="220" y="473" width="2" height="18" fill="#2196f3"/><rect x="222" y="455" width="2" height="18" fill="#2196f3"/><rect x="222" y="473" width="2" height="18" fill="#ff9800"/><rect x="224" y="455" width="2" height="18" fill="#f44336"/><rect x="224" y="473" width="2" height="18" fill="#4caf50"/><rect x="226" y="455" width="2" height="18" fill="#4caf50"/><rect x="226" y="473" width="2" height="18" fill="#f44336"/><rect x="228" y="455" width="2" height="18" fill="#f44336"/><rect x="228" y="473" width="2" height="18" fill="#4caf50"/><rect x="230" y="455" width="2" height="18" fill="#2196f3"/><rect x="230" y="473" width="2" height="18" fill="#ff9800"/><rect x="232" y="455" width="2" height="18" fill="#f44336"/><rect x="232" y="473" width="2" height="18" fill="#4caf50"/><rect x="234" y="455" width="2" height="18" fill="#2196f3"/><rect x="234" y="473" width="2" height="18" fill="#ff9800"/><rect x="236" y="455" width="3" height="18" fill="#4caf50"/><rect x="236" y="473" width="3" height="18" fill="#f44336"/><rect x="239" y="455" width="2" height="18" fill="#f44336"/><rect x="239" y="473" width="2" height="18" fill="#4caf50"/><rect x="241" y="455" width="2" height="18" fill="#f44336"/><rect x="241" y="473" width="2" height="18" fill="#4caf50"/><rect x="243" y="455" width="2" height="18" fill="#2196f3"/><rect x="243" y="473" width="2" height="18" fill="#ff9800"/><rect x="245" y="455" width="2" height="18" fill="#ff9800"/><rect x="245" y="473" width="2" height="18" fill="#2196f3"/><rect x="247" y="455" width="2" height="18" fill="#f44336"/><rect x="247" y="473" width="2" height="18" fill="#4caf50"/><rect x="249" y="455" width="2" height="18" fill="#2196f3"/><rect x="249" y="473" width="2" height="18" fill="#ff9800"/><rect x="251" y="455" width="2" height="18" fill="#4caf50"/><rect x="251" y="473" width="2" height="18" fill="#f44336"/><rect x="253" y="455" width="2" height="18" fill="#f44336"/><rect x="253" y="473" width="2" height="18" fill="#4caf50"/><rect x="255" y="455" width="2" height="18" fill="#ff9800"/><rect x="255" y="473" width="2" height="18" fill="#2196f3"/><rect x="257" y="455" width="2" height="18" fill="#ff9800"/><rect x="257" y="473" width="2" height="18" fill="#2196f3"/><rect x="259" y="455" width="2" height="18" fill="#4caf50"/><rect x="259" y="473" width="2" height="18" fill="#f44336"/><rect x="261" y="455" width="2" height="18" fill="#f44336"/><rect x="261" y="473" width="2" height="18" fill="#4caf50"/><rect x="263" y="455" width="3" height="18" fill="#4caf50"/><rect x="263" y="473" width="3" height="18" fill="#f44336"/><rect x="266" y="455" width="2" height="18" fill="#4caf50"/><rect x="266" y="473" width="2" height="18" fill="#f44336"/><rect x="268" y="455" width="2" height="18" fill="#4caf50"/><rect x="268" y="473" width="2" height="18" fill="#f44336"/><rect x="270" y="455" width="2" height="18" fill="#4caf50"/><rect x="270" y="473" width="2" height="18" fill="#f44336"/><rect x="272" y="455" width="2" height="18" fill="#f44336"/><rect x="272" y="473" width="2" height="18" fill="#4caf50"/><rect x="274" y="455" width="2" height="18" fill="#f44336"/><rect x="274" y="473" width="2" height="18" fill="#4caf50"/><rect x="276" y="455" width="2" height="18" fill="#ff9800"/><rect x="276" y="473" width="2" height="18" fill="#2196f3"/><rect x="278" y="455" width="2" height="18" fill="#2196f3"/><rect x="278" y="473" width="2" height="18" fill="#ff9800"/><rect x="280" y="455" width="2" height="18" fill="#4caf50"/><rect x="280" y="473" width="2" height="18" fill="#f44336"/><rect x="282" y="455" width="2" height="18" fill="#4caf50"/><rect x="282" y="473" width="2" height="18" fill="#f44336"/><rect x="284" y="455" width="2" height="18" fill="#4caf50"/><rect x="284" y="473" width="2" height="18" fill="#f44336"/><rect x="286" y="455" width="2" height="18" fill="#f44336"/><rect x="286" y="473" width="2" height="18" fill="#4caf50"/><rect x="288" y="455" width="2" height="18" fill="#ff9800"/><rect x="288" y="473" width="2" height="18" fill="#2196f3"/><rect x="290" y="455" width="3" height="18" fill="#4caf50"/><rect x="290" y="473" width="3" height="18" fill="#f44336"/><rect x="293" y="455" width="2" height="18" fill="#4caf50"/><rect x="293" y="473" width="2" height="18" fill="#f44336"/><rect x="295" y="455" width="2" height="18" fill="#4caf50"/><rect x="295" y="473" width="2" height="18" fill="#f44336"/><rect x="297" y="455" width="2" height="18" fill="#4caf50"/><rect x="297" y="473" width="2" height="18" fill="#f44336"/><rect x="299" y="455" width="2" height="18" fill="#4caf50"/><rect x="299" y="473" width="2" height="18" fill="#f44336"/><rect x="301" y="455" width="2" height="18" fill="#f44336"/><rect x="301" y="473" width="2" height="18" fill="#4caf50"/><rect x="303" y="455" width="2" height="18" fill="#2196f3"/><rect x="303" y="473" width="2" height="18" fill="#ff9800"/><rect x="305" y="455" width="2" height="18" fill="#f44336"/><rect x="305" y="473" width="2" height="18" fill="#4caf50"/><rect x="307" y="455" width="2" height="18" fill="#2196f3"/><rect x="307" y="473" width="2" height="18" fill="#ff9800"/><rect x="309" y="455" width="2" height="18" fill="#ff9800"/><rect x="309" y="473" width="2" height="18" fill="#2196f3"/><rect x="311" y="455" width="2" height="18" fill="#4caf50"/><rect x="311" y="473" width="2" height="18" fill="#f44336"/><rect x="313" y="455" width="2" height="18" fill="#f44336"/><rect x="313" y="473" width="2" height="18" fill="#4caf50"/><rect x="315" y="455" width="2" height="18" fill="#4caf50"/><rect x="315" y="473" width="2" height="18" fill="#f44336"/><rect x="317" y="455" width="3" height="18" fill="#4caf50"/><rect x="317" y="473" width="3" height="18" fill="#f44336"/><rect x="320" y="455" width="2" height="18" fill="#4caf50"/><rect x="320" y="473" width="2" height="18" fill="#f44336"/><rect x="322" y="455" width="2" height="18" fill="#f44336"/><rect x="322" y="473" width="2" height="18" fill="#4caf50"/><rect x="324" y="455" width="2" height="18" fill="#f44336"/><rect x="324" y="473" width="2" height="18" fill="#4caf50"/><rect x="326" y="455" width="2" height="18" fill="#2196f3"/><rect x="326" y="473" width="2" height="18" fill="#ff9800"/><rect x="328" y="455" width="2" height="18" fill="#4caf50"/><rect x="328" y="473" width="2" height="18" fill="#f44336"/><rect x="330" y="455" width="2" height="18" fill="#4caf50"/><rect x="330" y="473" width="2" height="18" fill="#f44336"/><rect x="332" y="455" width="2" height="18" fill="#ff9800"/><rect x="332" y="473" width="2" height="18" fill="#2196f3"/><rect x="334" y="455" width="2" height="18" fill="#2196f3"/><rect x="334" y="473" width="2" height="18" fill="#ff9800"/><rect x="336" y="455" width="2" height="18" fill="#4caf50"/><rect x="336" y="473" width="2" height="18" fill="#f44336"/><rect x="338" y="455" width="2" height="18" fill="#ff9800"/><rect x="338" y="473" width="2" height="18" fill="#2196f3"/><rect x="340" y="455" width="2" height="18" fill="#f44336"/><rect x="340" y="473" width="2" height="18" fill="#4caf50"/><rect x="342" y="455" width="2" height="18" fill="#4caf50"/><rect x="342" y="473" width="2" height="18" fill="#f44336"/><rect x="344" y="455" width="3" height="18" fill="#2196f3"/><rect x="344" y="473" width="3" height="18" fill="#ff9800"/><rect x="347" y="455" width="2" height="18" fill="#4caf50"/><rect x="347" y="473" width="2" height="18" fill="#f44336"/><rect x="349" y="455" width="2" height="18" fill="#f44336"/><rect x="349" y="473" width="2" height="18" fill="#4caf50"/><rect x="351" y="455" width="2" height="18" fill="#ff9800"/><rect x="351" y="473" width="2" height="18" fill="#2196f3"/><rect x="353" y="455" width="2" height="18" fill="#4caf50"/><rect x="353" y="473" width="2" height="18" fill="#f44336"/><rect x="355" y="455" width="2" height="18" fill="#4caf50"/><rect x="355" y="473" width="2" height="18" fill="#f44336"/><rect x="357" y="455" width="2" height="18" fill="#4caf50"/><rect x="357" y="473" width="2" height="18" fill="#f44336"/><rect x="359" y="455" width="2" height="18" fill="#ff9800"/><rect x="359" y="473" width="2" height="18" fill="#2196f3"/><rect x="361" y="455" width="2" height="18" fill="#4caf50"/><rect x="361" y="473" width="2" height="18" fill="#f44336"/><rect x="363" y="455" width="2" height="18" fill="#f44336"/><rect x="363" y="473" width="2" height="18" fill="#4caf50"/><rect x="365" y="455" width="2" height="18" fill="#2196f3"/><rect x="365" y="473" width="2" height="18" fill="#ff9800"/><rect x="367" y="455" width="2" height="18" fill="#4caf50"/><rect x="367" y="473" width="2" height="18" fill="#f44336"/><rect x="369" y="455" width="2" height="18" fill="#2196f3"/><rect x="369" y="473" width="2" height="18" fill="#ff9800"/><rect x="371" y="455" width="3" height="18" fill="#f44336"/><rect x="371" y="473" width="3" height="18" fill="#4caf50"/><rect x="374" y="455" width="2" height="18" fill="#4caf50"/><rect x="374" y="473" width="2" height="18" fill="#f44336"/><rect x="376" y="455" width="2" height="18" fill="#2196f3"/><rect x="376" y="473" width="2" height="18" fill="#ff9800"/><rect x="378" y="455" width="2" height="18" fill="#ff9800"/><rect x="378" y="473" width="2" height="18" fill="#2196f3"/><rect x="380" y="455" width="2" height="18" fill="#4caf50"/><rect x="380" y="473" width="2" height="18" fill="#f44336"/><rect x="382" y="455" width="2" height="18" fill="#2196f3"/><rect x="382" y="473" width="2" height="18" fill="#ff9800"/><rect x="384" y="455" width="2" height="18" fill="#f44336"/><rect x="384" y="473" width="2" height="18" fill="#4caf50"/><rect x="386" y="455" width="2" height="18" fill="#f44336"/><rect x="386" y="473" width="2" height="18" fill="#4caf50"/><rect x="388" y="455" width="2" height="18" fill="#2196f3"/><rect x="388" y="473" width="2" height="18" fill="#ff9800"/><rect x="390" y="455" width="2" height="18" fill="#ff9800"/><rect x="390" y="473" width="2" height="18" fill="#2196f3"/><rect x="392" y="455" width="2" height="18" fill="#4caf50"/><rect x="392" y="473" width="2" height="18" fill="#f44336"/><rect x="394" y="455" width="2" height="18" fill="#f44336"/><rect x="394" y="473" width="2" height="18" fill="#4caf50"/><rect x="396" y="455" width="2" height="18" fill="#4caf50"/><rect x="396" y="473" width="2" height="18" fill="#f44336"/><rect x="398" y="455" width="3" height="18" fill="#4caf50"/><rect x="398" y="473" width="3" height="18" fill="#f44336"/><rect x="401" y="455" width="2" height="18" fill="#4caf50"/><rect x="401" y="473" width="2" height="18" fill="#f44336"/><rect x="403" y="455" width="2" height="18" fill="#ff9800"/><rect x="403" y="473" width="2" height="18" fill="#2196f3"/><rect x="405" y="455" width="2" height="18" fill="#4caf50"/><rect x="405" y="473" width="2" height="18" fill="#f44336"/><rect x="407" y="455" width="2" height="18" fill="#4caf50"/><rect x="407" y="473" width="2" height="18" fill="#f44336"/><rect x="409" y="455" width="2" height="18" fill="#ff9800"/><rect x="409" y="473" width="2" height="18" fill="#2196f3"/><rect x="411" y="455" width="2" height="18" fill="#4caf50"/><rect x="411" y="473" width="2" height="18" fill="#f44336"/><rect x="413" y="455" width="2" height="18" fill="#ff9800"/><rect x="413" y="473" width="2" height="18" fill="#2196f3"/><rect x="415" y="455" width="2" height="18" fill="#f44336"/><rect x="415" y="473" width="2" height="18" fill="#4caf50"/><rect x="417" y="455" width="2" height="18" fill="#f44336"/><rect x="417" y="473" width="2" height="18" fill="#4caf50"/><rect x="419" y="455" width="2" height="18" fill="#ff9800"/><rect x="419" y="473" width="2" height="18" fill="#2196f3"/><rect x="421" y="455" width="2" height="18" fill="#4caf50"/><rect x="421" y="473" width="2" height="18" fill="#f44336"/><rect x="423" y="455" width="2" height="18" fill="#2196f3"/><rect x="423" y="473" width="2" height="18" fill="#ff9800"/><rect x="425" y="455" width="3" height="18" fill="#f44336"/><rect x="425" y="473" width="3" height="18" fill="#4caf50"/><rect x="428" y="455" width="2" height="18" fill="#ff9800"/><rect x="428" y="473" width="2" height="18" fill="#2196f3"/><rect x="430" y="455" width="2" height="18" fill="#f44336"/><rect x="430" y="473" width="2" height="18" fill="#4caf50"/><rect x="432" y="455" width="2" height="18" fill="#f44336"/><rect x="432" y="473" width="2" height="18" fill="#4caf50"/><rect x="434" y="455" width="2" height="18" fill="#f44336"/><rect x="434" y="473" width="2" height="18" fill="#4caf50"/><rect x="436" y="455" width="2" height="18" fill="#ff9800"/><rect x="436" y="473" width="2" height="18" fill="#2196f3"/><rect x="438" y="455" width="2" height="18" fill="#ff9800"/><rect x="438" y="473" width="2" height="18" fill="#2196f3"/><rect x="440" y="455" width="2" height="18" fill="#ff9800"/><rect x="440" y="473" width="2" height="18" fill="#2196f3"/><rect x="442" y="455" width="2" height="18" fill="#4caf50"/><rect x="442" y="473" width="2" height="18" fill="#f44336"/><rect x="444" y="455" width="2" height="18" fill="#2196f3"/><rect x="444" y="473" width="2" height="18" fill="#ff9800"/><rect x="446" y="455" width="2" height="18" fill="#f44336"/><rect x="446" y="473" width="2" height="18" fill="#4caf50"/><rect x="448" y="455" width="2" height="18" fill="#4caf50"/><rect x="448" y="473" width="2" height="18" fill="#f44336"/><rect x="450" y="455" width="2" height="18" fill="#f44336"/><rect x="450" y="473" width="2" height="18" fill="#4caf50"/><rect x="452" y="455" width="3" height="18" fill="#ff9800"/><rect x="452" y="473" width="3" height="18" fill="#2196f3"/><rect x="455" y="455" width="2" height="18" fill="#2196f3"/><rect x="455" y="473" width="2" height="18" fill="#ff9800"/><rect x="457" y="455" width="2" height="18" fill="#f44336"/><rect x="457" y="473" width="2" height="18" fill="#4caf50"/><rect x="459" y="455" width="2" height="18" fill="#ff9800"/><rect x="459" y="473" width="2" height="18" fill="#2196f3"/><rect x="461" y="455" width="2" height="18" fill="#2196f3"/><rect x="461" y="473" width="2" height="18" fill="#ff9800"/><rect x="463" y="455" width="2" height="18" fill="#f44336"/><rect x="463" y="473" width="2" height="18" fill="#4caf50"/><rect x="465" y="455" width="2" height="18" fill="#ff9800"/><rect x="465" y="473" width="2" height="18" fill="#2196f3"/><rect x="467" y="455" width="2" height="18" fill="#ff9800"/><rect x="467" y="473" width="2" height="18" fill="#2196f3"/><rect x="469" y="455" width="2" height="18" fill="#4caf50"/><rect x="469" y="473" width="2" height="18" fill="#f44336"/><rect x="471" y="455" width="2" height="18" fill="#ff9800"/><rect x="471" y="473" width="2" height="18" fill="#2196f3"/><rect x="473" y="455" width="2" height="18" fill="#ff9800"/><rect x="473" y="473" width="2" height="18" fill="#2196f3"/><rect x="475" y="455" width="2" height="18" fill="#2196f3"/><rect x="475" y="473" width="2" height="18" fill="#ff9800"/><rect x="477" y="455" width="2" height="18" fill="#ff9800"/><rect x="477" y="473" width="2" height="18" fill="#2196f3"/><rect x="479" y="455" width="2" height="18" fill="#f44336"/><rect x="479" y="473" width="2" height="18" fill="#4caf50"/><rect x="481" y="455" width="3" height="18" fill="#4caf50"/><rect x="481" y="473" width="3" height="18" fill="#f44336"/><rect x="484" y="455" width="2" height="18" fill="#ff9800"/><rect x="484" y="473" width="2" height="18" fill="#2196f3"/><rect x="486" y="455" width="2" height="18" fill="#2196f3"/><rect x="486" y="473" width="2" height="18" fill="#ff9800"/><rect x="488" y="455" width="2" height="18" fill="#4caf50"/><rect x="488" y="473" width="2" height="18" fill="#f44336"/><rect x="490" y="455" width="2" height="18" fill="#ff9800"/><rect x="490" y="473" width="2" height="18" fill="#2196f3"/><rect x="492" y="455" width="2" height="18" fill="#f44336"/><rect x="492" y="473" width="2" height="18" fill="#4caf50"/><rect x="494" y="455" width="2" height="18" fill="#f44336"/><rect x="494" y="473" width="2" height="18" fill="#4caf50"/><rect x="496" y="455" width="2" height="18" fill="#ff9800"/><rect x="496" y="473" width="2" height="18" fill="#2196f3"/><rect x="498" y="455" width="2" height="18" fill="#ff9800"/><rect x="498" y="473" width="2" height="18" fill="#2196f3"/><rect x="500" y="455" width="2" height="18" fill="#f44336"/><rect x="500" y="473" width="2" height="18" fill="#4caf50"/><rect x="502" y="455" width="2" height="18" fill="#2196f3"/><rect x="502" y="473" width="2" height="18" fill="#ff9800"/><rect x="504" y="455" width="2" height="18" fill="#f44336"/><rect x="504" y="473" width="2" height="18" fill="#4caf50"/><rect x="506" y="455" width="2" height="18" fill="#ff9800"/><rect x="506" y="473" width="2" height="18" fill="#2196f3"/><rect x="508" y="455" width="3" height="18" fill="#ff9800"/><rect x="508" y="473" width="3" height="18" fill="#2196f3"/><rect x="511" y="455" width="2" height="18" fill="#f44336"/><rect x="511" y="473" width="2" height="18" fill="#4caf50"/><rect x="513" y="455" width="2" height="18" fill="#4caf50"/><rect x="513" y="473" width="2" height="18" fill="#f44336"/><rect x="515" y="455" width="2" height="18" fill="#2196f3"/><rect x="515" y="473" width="2" height="18" fill="#ff9800"/><rect x="517" y="455" width="2" height="18" fill="#f44336"/><rect x="517" y="473" width="2" height="18" fill="#4caf50"/><rect x="519" y="455" width="2" height="18" fill="#2196f3"/><rect x="519" y="473" width="2" height="18" fill="#ff9800"/><rect x="521" y="455" width="2" height="18" fill="#ff9800"/><rect x="521" y="473" width="2" height="18" fill="#2196f3"/><rect x="523" y="455" width="2" height="18" fill="#2196f3"/><rect x="523" y="473" width="2" height="18" fill="#ff9800"/><rect x="525" y="455" width="2" height="18" fill="#4caf50"/><rect x="525" y="473" width="2" height="18" fill="#f44336"/><rect x="527" y="455" width="2" height="18" fill="#4caf50"/><rect x="527" y="473" width="2" height="18" fill="#f44336"/><rect x="529" y="455" width="2" height="18" fill="#f44336"/><rect x="529" y="473" width="2" height="18" fill="#4caf50"/><rect x="531" y="455" width="2" height="18" fill="#ff9800"/><rect x="531" y="473" width="2" height="18" fill="#2196f3"/><rect x="533" y="455" width="2" height="18" fill="#4caf50"/><rect x="533" y="473" width="2" height="18" fill="#f44336"/><rect x="535" y="455" width="3" height="18" fill="#f44336"/><rect x="535" y="473" width="3" height="18" fill="#4caf50"/><rect x="538" y="455" width="2" height="18" fill="#f44336"/><rect x="538" y="473" width="2" height="18" fill="#4caf50"/><rect x="540" y="455" width="2" height="18" fill="#4caf50"/><rect x="540" y="473" width="2" height="18" fill="#f44336"/><rect x="542" y="455" width="2" height="18" fill="#4caf50"/><rect x="542" y="473" width="2" height="18" fill="#f44336"/><rect x="544" y="455" width="2" height="18" fill="#4caf50"/><rect x="544" y="473" width="2" height="18" fill="#f44336"/><rect x="546" y="455" width="2" height="18" fill="#4caf50"/><rect x="546" y="473" width="2" height="18" fill="#f44336"/><rect x="548" y="455" width="2" height="18" fill="#ff9800"/><rect x="548" y="473" width="2" height="18" fill="#2196f3"/><rect x="550" y="455" width="2" height="18" fill="#f44336"/><rect x="550" y="473" width="2" height="18" fill="#4caf50"/><rect x="552" y="455" width="2" height="18" fill="#4caf50"/><rect x="552" y="473" width="2" height="18" fill="#f44336"/><rect x="554" y="455" width="2" height="18" fill="#f44336"/><rect x="554" y="473" width="2" height="18" fill="#4caf50"/><rect x="556" y="455" width="2" height="18" fill="#2196f3"/><rect x="556" y="473" width="2" height="18" fill="#ff9800"/><rect x="558" y="455" width="2" height="18" fill="#4caf50"/><rect x="558" y="473" width="2" height="18" fill="#f44336"/><rect x="560" y="455" width="2" height="18" fill="#2196f3"/><rect x="560" y="473" width="2" height="18" fill="#ff9800"/><rect x="562" y="455" width="3" height="18" fill="#ff9800"/><rect x="562" y="473" width="3" height="18" fill="#2196f3"/><rect x="565" y="455" width="2" height="18" fill="#2196f3"/><rect x="565" y="473" width="2" height="18" fill="#ff9800"/><rect x="567" y="455" width="2" height="18" fill="#f44336"/><rect x="567" y="473" width="2" height="18" fill="#4caf50"/><rect x="569" y="455" width="2" height="18" fill="#4caf50"/><rect x="569" y="473" width="2" height="18" fill="#f44336"/><rect x="571" y="455" width="2" height="18" fill="#ff9800"/><rect x="571" y="473" width="2" height="18" fill="#2196f3"/><rect x="573" y="455" width="2" height="18" fill="#f44336"/><rect x="573" y="473" width="2" height="18" fill="#4caf50"/><rect x="575" y="455" width="2" height="18" fill="#f44336"/><rect x="575" y="473" width="2" height="18" fill="#4caf50"/><rect x="577" y="455" width="2" height="18" fill="#ff9800"/><rect x="577" y="473" width="2" height="18" fill="#2196f3"/><rect x="579" y="455" width="2" height="18" fill="#f44336"/><rect x="579" y="473" width="2" height="18" fill="#4caf50"/><rect x="581" y="455" width="2" height="18" fill="#f44336"/><rect x="581" y="473" width="2" height="18" fill="#4caf50"/><rect x="583" y="455" width="2" height="18" fill="#ff9800"/><rect x="583" y="473" width="2" height="18" fill="#2196f3"/><rect x="585" y="455" width="2" height="18" fill="#ff9800"/><rect x="585" y="473" width="2" height="18" fill="#2196f3"/><rect x="587" y="455" width="2" height="18" fill="#f44336"/><rect x="587" y="473" width="2" height="18" fill="#4caf50"/><rect x="589" y="455" width="3" height="18" fill="#ff9800"/><rect x="589" y="473" width="3" height="18" fill="#2196f3"/><rect x="592" y="455" width="2" height="18" fill="#f44336"/><rect x="592" y="473" width="2" height="18" fill="#4caf50"/><rect x="594" y="455" width="2" height="18" fill="#f44336"/><rect x="594" y="473" width="2" height="18" fill="#4caf50"/><rect x="596" y="455" width="2" height="18" fill="#ff9800"/><rect x="596" y="473" width="2" height="18" fill="#2196f3"/><rect x="598" y="455" width="2" height="18" fill="#2196f3"/><rect x="598" y="473" width="2" height="18" fill="#ff9800"/><rect x="600" y="455" width="2" height="18" fill="#4caf50"/><rect x="600" y="473" width="2" height="18" fill="#f44336"/><rect x="602" y="455" width="2" height="18" fill="#2196f3"/><rect x="602" y="473" width="2" height="18" fill="#ff9800"/><rect x="604" y="455" width="2" height="18" fill="#f44336"/><rect x="604" y="473" width="2" height="18" fill="#4caf50"/><rect x="606" y="455" width="2" height="18" fill="#ff9800"/><rect x="606" y="473" width="2" height="18" fill="#2196f3"/><rect x="608" y="455" width="2" height="18" fill="#f44336"/><rect x="608" y="473" width="2" height="18" fill="#4caf50"/><rect x="610" y="455" width="2" height="18" fill="#f44336"/><rect x="610" y="473" width="2" height="18" fill="#4caf50"/><rect x="612" y="455" width="2" height="18" fill="#f44336"/><rect x="612" y="473" width="2" height="18" fill="#4caf50"/><rect x="614" y="455" width="2" height="18" fill="#4caf50"/><rect x="614" y="473" width="2" height="18" fill="#f44336"/><rect x="616" y="455" width="3" height="18" fill="#f44336"/><rect x="616" y="473" width="3" height="18" fill="#4caf50"/><rect x="619" y="455" width="2" height="18" fill="#f44336"/><rect x="619" y="473" width="2" height="18" fill="#4caf50"/><rect x="621" y="455" width="2" height="18" fill="#ff9800"/><rect x="621" y="473" width="2" height="18" fill="#2196f3"/><rect x="623" y="455" width="2" height="18" fill="#ff9800"/><rect x="623" y="473" width="2" height="18" fill="#2196f3"/><rect x="625" y="455" width="2" height="18" fill="#ff9800"/><rect x="625" y="473" width="2" height="18" fill="#2196f3"/><rect x="627" y="455" width="2" height="18" fill="#2196f3"/><rect x="627" y="473" width="2" height="18" fill="#ff9800"/><rect x="629" y="455" width="2" height="18" fill="#4caf50"/><rect x="629" y="473" width="2" height="18" fill="#f44336"/><rect x="631" y="455" width="2" height="18" fill="#2196f3"/><rect x="631" y="473" width="2" height="18" fill="#ff9800"/><rect x="633" y="455" width="2" height="18" fill="#4caf50"/><rect x="633" y="473" width="2" height="18" fill="#f44336"/><rect x="635" y="455" width="2" height="18" fill="#f44336"/><rect x="635" y="473" width="2" height="18" fill="#4caf50"/><rect x="637" y="455" width="2" height="18" fill="#ff9800"/><rect x="637" y="473" width="2" height="18" fill="#2196f3"/><rect x="639" y="455" width="2" height="18" fill="#4caf50"/><rect x="639" y="473" width="2" height="18" fill="#f44336"/><rect x="641" y="455" width="2" height="18" fill="#2196f3"/><rect x="641" y="473" width="2" height="18" fill="#ff9800"/><rect x="643" y="455" width="3" height="18" fill="#2196f3"/><rect x="643" y="473" width="3" height="18" fill="#ff9800"/><rect x="646" y="455" width="2" height="18" fill="#f44336"/><rect x="646" y="473" width="2" height="18" fill="#4caf50"/><rect x="648" y="455" width="2" height="18" fill="#f44336"/><rect x="648" y="473" width="2" height="18" fill="#4caf50"/><rect x="650" y="455" width="2" height="18" fill="#f44336"/><rect x="650" y="473" width="2" height="18" fill="#4caf50"/><rect x="652" y="455" width="2" height="18" fill="#4caf50"/><rect x="652" y="473" width="2" height="18" fill="#f44336"/><rect x="654" y="455" width="2" height="18" fill="#4caf50"/><rect x="654" y="473" width="2" height="18" fill="#f44336"/><rect x="656" y="455" width="2" height="18" fill="#ff9800"/><rect x="656" y="473" width="2" height="18" fill="#2196f3"/><rect x="658" y="455" width="2" height="18" fill="#4caf50"/><rect x="658" y="473" width="2" height="18" fill="#f44336"/><rect x="660" y="455" width="2" height="18" fill="#4caf50"/><rect x="660" y="473" width="2" height="18" fill="#f44336"/><rect x="662" y="455" width="2" height="18" fill="#ff9800"/><rect x="662" y="473" width="2" height="18" fill="#2196f3"/><rect x="664" y="455" width="2" height="18" fill="#f44336"/><rect x="664" y="473" width="2" height="18" fill="#4caf50"/><rect x="666" y="455" width="2" height="18" fill="#4caf50"/><rect x="666" y="473" width="2" height="18" fill="#f44336"/><rect x="668" y="455" width="2" height="18" fill="#4caf50"/><rect x="668" y="473" width="2" height="18" fill="#f44336"/><rect x="670" y="455" width="3" height="18" fill="#f44336"/><rect x="670" y="473" width="3" height="18" fill="#4caf50"/><rect x="673" y="455" width="2" height="18" fill="#f44336"/><rect x="673" y="473" width="2" height="18" fill="#4caf50"/><rect x="675" y="455" width="2" height="18" fill="#f44336"/><rect x="675" y="473" width="2" height="18" fill="#4caf50"/><rect x="677" y="455" width="2" height="18" fill="#ff9800"/><rect x="677" y="473" width="2" height="18" fill="#2196f3"/><rect x="679" y="455" width="2" height="18" fill="#2196f3"/><rect x="679" y="473" width="2" height="18" fill="#ff9800"/><rect x="681" y="455" width="2" height="18" fill="#f44336"/><rect x="681" y="473" width="2" height="18" fill="#4caf50"/><rect x="683" y="455" width="2" height="18" fill="#f44336"/><rect x="683" y="473" width="2" height="18" fill="#4caf50"/><rect x="685" y="455" width="2" height="18" fill="#4caf50"/><rect x="685" y="473" width="2" height="18" fill="#f44336"/><rect x="687" y="455" width="2" height="18" fill="#4caf50"/><rect x="687" y="473" width="2" height="18" fill="#f44336"/><rect x="689" y="455" width="2" height="18" fill="#4caf50"/><rect x="689" y="473" width="2" height="18" fill="#f44336"/><rect x="691" y="455" width="2" height="18" fill="#ff9800"/><rect x="691" y="473" width="2" height="18" fill="#2196f3"/><rect x="693" y="455" width="2" height="18" fill="#4caf50"/><rect x="693" y="473" width="2" height="18" fill="#f44336"/><rect x="695" y="455" width="2" height="18" fill="#ff9800"/><rect x="695" y="473" width="2" height="18" fill="#2196f3"/><rect x="697" y="455" width="3" height="18" fill="#4caf50"/><rect x="697" y="473" width="3" height="18" fill="#f44336"/><rect x="700" y="455" width="2" height="18" fill="#f44336"/><rect x="700" y="473" width="2" height="18" fill="#4caf50"/><rect x="702" y="455" width="2" height="18" fill="#2196f3"/><rect x="702" y="473" width="2" height="18" fill="#ff9800"/><rect x="704" y="455" width="2" height="18" fill="#4caf50"/><rect x="704" y="473" width="2" height="18" fill="#f44336"/><rect x="706" y="455" width="2" height="18" fill="#ff9800"/><rect x="706" y="473" width="2" height="18" fill="#2196f3"/><rect x="708" y="455" width="2" height="18" fill="#f44336"/><rect x="708" y="473" width="2" height="18" fill="#4caf50"/><rect x="710" y="455" width="2" height="18" fill="#ff9800"/><rect x="710" y="473" width="2" height="18" fill="#2196f3"/><rect x="712" y="455" width="2" height="18" fill="#f44336"/><rect x="712" y="473" width="2" height="18" fill="#4caf50"/><rect x="714" y="455" width="2" height="18" fill="#f44336"/><rect x="714" y="473" width="2" height="18" fill="#4caf50"/><rect x="716" y="455" width="2" height="18" fill="#4caf50"/><rect x="716" y="473" width="2" height="18" fill="#f44336"/><rect x="718" y="455" width="2" height="18" fill="#f44336"/><rect x="718" y="473" width="2" height="18" fill="#4caf50"/><rect x="720" y="455" width="2" height="18" fill="#f44336"/><rect x="720" y="473" width="2" height="18" fill="#4caf50"/><rect x="722" y="455" width="2" height="18" fill="#4caf50"/><rect x="722" y="473" width="2" height="18" fill="#f44336"/><rect x="724" y="455" width="3" height="18" fill="#f44336"/><rect x="724" y="473" width="3" height="18" fill="#4caf50"/><rect x="727" y="455" width="2" height="18" fill="#f44336"/><rect x="727" y="473" width="2" height="18" fill="#4caf50"/><rect x="729" y="455" width="2" height="18" fill="#4caf50"/><rect x="729" y="473" width="2" height="18" fill="#f44336"/><rect x="731" y="455" width="2" height="18" fill="#4caf50"/><rect x="731" y="473" width="2" height="18" fill="#f44336"/><rect x="733" y="455" width="2" height="18" fill="#f44336"/><rect x="733" y="473" width="2" height="18" fill="#4caf50"/><rect x="735" y="455" width="2" height="18" fill="#2196f3"/><rect x="735" y="473" width="2" height="18" fill="#ff9800"/><rect x="737" y="455" width="2" height="18" fill="#f44336"/><rect x="737" y="473" width="2" height="18" fill="#4caf50"/><rect x="739" y="455" width="2" height="18" fill="#4caf50"/><rect x="739" y="473" width="2" height="18" fill="#f44336"/><rect x="741" y="455" width="2" height="18" fill="#f44336"/><rect x="741" y="473" width="2" height="18" fill="#4caf50"/><rect x="743" y="455" width="2" height="18" fill="#2196f3"/><rect x="743" y="473" width="2" height="18" fill="#ff9800"/><rect x="745" y="455" width="2" height="18" fill="#4caf50"/><rect x="745" y="473" width="2" height="18" fill="#f44336"/><rect x="747" y="455" width="2" height="18" fill="#4caf50"/><rect x="747" y="473" width="2" height="18" fill="#f44336"/><rect x="749" y="455" width="2" height="18" fill="#2196f3"/><rect x="749" y="473" width="2" height="18" fill="#ff9800"/><rect x="751" y="455" width="3" height="18" fill="#f44336"/><rect x="751" y="473" width="3" height="18" fill="#4caf50"/><rect x="754" y="455" width="2" height="18" fill="#4caf50"/><rect x="754" y="473" width="2" height="18" fill="#f44336"/><rect x="756" y="455" width="2" height="18" fill="#4caf50"/><rect x="756" y="473" width="2" height="18" fill="#f44336"/><rect x="758" y="455" width="2" height="18" fill="#4caf50"/><rect x="758" y="473" width="2" height="18" fill="#f44336"/><rect x="760" y="455" width="2" height="18" fill="#2196f3"/><rect x="760" y="473" width="2" height="18" fill="#ff9800"/><rect x="762" y="455" width="2" height="18" fill="#4caf50"/><rect x="762" y="473" width="2" height="18" fill="#f44336"/><rect x="764" y="455" width="2" height="18" fill="#f44336"/><rect x="764" y="473" width="2" height="18" fill="#4caf50"/><rect x="766" y="455" width="2" height="18" fill="#4caf50"/><rect x="766" y="473" width="2" height="18" fill="#f44336"/><rect x="768" y="455" width="2" height="18" fill="#4caf50"/><rect x="768" y="473" width="2" height="18" fill="#f44336"/><rect x="770" y="455" width="2" height="18" fill="#ff9800"/><rect x="770" y="473" width="2" height="18" fill="#2196f3"/><rect x="772" y="455" width="2" height="18" fill="#ff9800"/><rect x="772" y="473" width="2" height="18" fill="#2196f3"/><rect x="774" y="455" width="2" height="18" fill="#4caf50"/><rect x="774" y="473" width="2" height="18" fill="#f44336"/><rect x="776" y="455" width="2" height="18" fill="#f44336"/><rect x="776" y="473" width="2" height="18" fill="#4caf50"/><rect x="778" y="455" width="3" height="18" fill="#f44336"/><rect x="778" y="473" width="3" height="18" fill="#4caf50"/><rect x="781" y="455" width="2" height="18" fill="#f44336"/><rect x="781" y="473" width="2" height="18" fill="#4caf50"/><rect x="783" y="455" width="2" height="18" fill="#4caf50"/><rect x="783" y="473" width="2" height="18" fill="#f44336"/><rect x="785" y="455" width="2" height="18" fill="#2196f3"/><rect x="785" y="473" width="2" height="18" fill="#ff9800"/><rect x="787" y="455" width="2" height="18" fill="#4caf50"/><rect x="787" y="473" width="2" height="18" fill="#f44336"/><rect x="789" y="455" width="2" height="18" fill="#f44336"/><rect x="789" y="473" width="2" height="18" fill="#4caf50"/><rect x="791" y="455" width="2" height="18" fill="#ff9800"/><rect x="791" y="473" width="2" height="18" fill="#2196f3"/><rect x="793" y="455" width="2" height="18" fill="#4caf50"/><rect x="793" y="473" width="2" height="18" fill="#f44336"/><rect x="795" y="455" width="2" height="18" fill="#4caf50"/><rect x="795" y="473" width="2" height="18" fill="#f44336"/><rect x="797" y="455" width="2" height="18" fill="#4caf50"/><rect x="797" y="473" width="2" height="18" fill="#f44336"/><rect x="799" y="455" width="2" height="18" fill="#2196f3"/><rect x="799" y="473" width="2" height="18" fill="#ff9800"/><rect x="801" y="455" width="2" height="18" fill="#ff9800"/><rect x="801" y="473" width="2" height="18" fill="#2196f3"/><rect x="803" y="455" width="2" height="18" fill="#2196f3"/><rect x="803" y="473" width="2" height="18" fill="#ff9800"/><rect x="805" y="455" width="2" height="18" fill="#4caf50"/><rect x="805" y="473" width="2" height="18" fill="#f44336"/><rect x="807" y="455" width="3" height="18" fill="#f44336"/><rect x="807" y="473" width="3" height="18" fill="#4caf50"/><rect x="810" y="455" width="2" height="18" fill="#f44336"/><rect x="810" y="473" width="2" height="18" fill="#4caf50"/><rect x="812" y="455" width="2" height="18" fill="#ff9800"/><rect x="812" y="473" width="2" height="18" fill="#2196f3"/><rect x="814" y="455" width="2" height="18" fill="#f44336"/><rect x="814" y="473" width="2" height="18" fill="#4caf50"/><rect x="816" y="455" width="2" height="18" fill="#4caf50"/><rect x="816" y="473" width="2" height="18" fill="#f44336"/><rect x="818" y="455" width="2" height="18" fill="#2196f3"/><rect x="818" y="473" width="2" height="18" fill="#ff9800"/><rect x="820" y="455" width="2" height="18" fill="#f44336"/><rect x="820" y="473" width="2" height="18" fill="#4caf50"/><rect x="822" y="455" width="2" height="18" fill="#ff9800"/><rect x="822" y="473" width="2" height="18" fill="#2196f3"/><rect x="824" y="455" width="2" height="18" fill="#4caf50"/><rect x="824" y="473" width="2" height="18" fill="#f44336"/><rect x="826" y="455" width="2" height="18" fill="#4caf50"/><rect x="826" y="473" width="2" height="18" fill="#f44336"/><rect x="828" y="455" width="2" height="18" fill="#f44336"/><rect x="828" y="473" width="2" height="18" fill="#4caf50"/><rect x="830" y="455" width="2" height="18" fill="#4caf50"/><rect x="830" y="473" width="2" height="18" fill="#f44336"/><rect x="832" y="455" width="2" height="18" fill="#f44336"/><rect x="832" y="473" width="2" height="18" fill="#4caf50"/><rect x="834" y="455" width="3" height="18" fill="#f44336"/><rect x="834" y="473" width="3" height="18" fill="#4caf50"/><rect x="837" y="455" width="2" height="18" fill="#ff9800"/><rect x="837" y="473" width="2" height="18" fill="#2196f3"/><rect x="839" y="455" width="2" height="18" fill="#4caf50"/><rect x="839" y="473" width="2" height="18" fill="#f44336"/><rect x="841" y="455" width="2" height="18" fill="#f44336"/><rect x="841" y="473" width="2" height="18" fill="#4caf50"/><rect x="843" y="455" width="2" height="18" fill="#2196f3"/><rect x="843" y="473" width="2" height="18" fill="#ff9800"/><rect x="845" y="455" width="2" height="18" fill="#4caf50"/><rect x="845" y="473" width="2" height="18" fill="#f44336"/><rect x="847" y="455" width="2" height="18" fill="#2196f3"/><rect x="847" y="473" width="2" height="18" fill="#ff9800"/><rect x="849" y="455" width="2" height="18" fill="#ff9800"/><rect x="849" y="473" width="2" height="18" fill="#2196f3"/><rect x="851" y="455" width="2" height="18" fill="#4caf50"/><rect x="851" y="473" width="2" height="18" fill="#f44336"/><rect x="853" y="455" width="2" height="18" fill="#2196f3"/><rect x="853" y="473" width="2" height="18" fill="#ff9800"/><rect x="855" y="455" width="2" height="18" fill="#ff9800"/><rect x="855" y="473" width="2" height="18" fill="#2196f3"/><rect x="857" y="455" width="2" height="18" fill="#2196f3"/><rect x="857" y="473" width="2" height="18" fill="#ff9800"/><rect x="859" y="455" width="2" height="18" fill="#f44336"/><rect x="859" y="473" width="2" height="18" fill="#4caf50"/><rect x="861" y="455" width="3" height="18" fill="#4caf50"/><rect x="861" y="473" width="3" height="18" fill="#f44336"/><rect x="864" y="455" width="2" height="18" fill="#2196f3"/><rect x="864" y="473" width="2" height="18" fill="#ff9800"/><rect x="866" y="455" width="2" height="18" fill="#2196f3"/><rect x="866" y="473" width="2" height="18" fill="#ff9800"/><rect x="868" y="455" width="2" height="18" fill="#f44336"/><rect x="868" y="473" width="2" height="18" fill="#4caf50"/><rect x="870" y="455" width="2" height="18" fill="#f44336"/><rect x="870" y="473" width="2" height="18" fill="#4caf50"/><rect x="872" y="455" width="2" height="18" fill="#f44336"/><rect x="872" y="473" width="2" height="18" fill="#4caf50"/><rect x="874" y="455" width="2" height="18" fill="#ff9800"/><rect x="874" y="473" width="2" height="18" fill="#2196f3"/><rect x="876" y="455" width="2" height="18" fill="#4caf50"/><rect x="876" y="473" width="2" height="18" fill="#f44336"/><rect x="878" y="455" width="2" height="18" fill="#4caf50"/><rect x="878" y="473" width="2" height="18" fill="#f44336"/><rect x="880" y="455" width="2" height="18" fill="#2196f3"/><rect x="880" y="473" width="2" height="18" fill="#ff9800"/><rect x="882" y="455" width="2" height="18" fill="#4caf50"/><rect x="882" y="473" width="2" height="18" fill="#f44336"/><rect x="884" y="455" width="2" height="18" fill="#2196f3"/><rect x="884" y="473" width="2" height="18" fill="#ff9800"/><rect x="886" y="455" width="2" height="18" fill="#f44336"/><rect x="886" y="473" width="2" height="18" fill="#4caf50"/><rect x="888" y="455" width="3" height="18" fill="#ff9800"/><rect x="888" y="473" width="3" height="18" fill="#2196f3"/><rect x="891" y="455" width="2" height="18" fill="#2196f3"/><rect x="891" y="473" width="2" height="18" fill="#ff9800"/><rect x="893" y="455" width="2" height="18" fill="#2196f3"/><rect x="893" y="473" width="2" height="18" fill="#ff9800"/><rect x="895" y="455" width="2" height="18" fill="#4caf50"/><rect x="895" y="473" width="2" height="18" fill="#f44336"/><rect x="897" y="455" width="2" height="18" fill="#f44336"/><rect x="897" y="473" width="2" height="18" fill="#4caf50"/><rect x="899" y="455" width="2" height="18" fill="#ff9800"/><rect x="899" y="473" width="2" height="18" fill="#2196f3"/><rect x="901" y="455" width="2" height="18" fill="#ff9800"/><rect x="901" y="473" width="2" height="18" fill="#2196f3"/><rect x="903" y="455" width="2" height="18" fill="#2196f3"/><rect x="903" y="473" width="2" height="18" fill="#ff9800"/><rect x="905" y="455" width="2" height="18" fill="#4caf50"/><rect x="905" y="473" width="2" height="18" fill="#f44336"/><rect x="907" y="455" width="2" height="18" fill="#4caf50"/><rect x="907" y="473" width="2" height="18" fill="#f44336"/><rect x="909" y="455" width="2" height="18" fill="#4caf50"/><rect x="909" y="473" width="2" height="18" fill="#f44336"/><rect x="911" y="455" width="2" height="18" fill="#ff9800"/><rect x="911" y="473" width="2" height="18" fill="#2196f3"/><rect x="913" y="455" width="2" height="18" fill="#f44336"/><rect x="913" y="473" width="2" height="18" fill="#4caf50"/><rect x="915" y="455" width="3" height="18" fill="#f44336"/><rect x="915" y="473" width="3" height="18" fill="#4caf50"/><rect x="918" y="455" width="2" height="18" fill="#2196f3"/><rect x="918" y="473" width="2" height="18" fill="#ff9800"/><rect x="920" y="455" width="2" height="18" fill="#2196f3"/><rect x="920" y="473" width="2" height="18" fill="#ff9800"/><rect x="922" y="455" width="2" height="18" fill="#f44336"/><rect x="922" y="473" width="2" height="18" fill="#4caf50"/><rect x="924" y="455" width="2" height="18" fill="#2196f3"/><rect x="924" y="473" width="2" height="18" fill="#ff9800"/><rect x="926" y="455" width="2" height="18" fill="#2196f3"/><rect x="926" y="473" width="2" height="18" fill="#ff9800"/><rect x="928" y="455" width="2" height="18" fill="#f44336"/><rect x="928" y="473" width="2" height="18" fill="#4caf50"/><rect x="930" y="455" width="2" height="18" fill="#ff9800"/><rect x="930" y="473" width="2" height="18" fill="#2196f3"/><rect x="932" y="455" width="2" height="18" fill="#f44336"/><rect x="932" y="473" width="2" height="18" fill="#4caf50"/><rect x="934" y="455" width="2" height="18" fill="#f44336"/><rect x="934" y="473" width="2" height="18" fill="#4caf50"/><rect x="936" y="455" width="2" height="18" fill="#2196f3"/><rect x="936" y="473" width="2" height="18" fill="#ff9800"/><rect x="938" y="455" width="2" height="18" fill="#f44336"/><rect x="938" y="473" width="2" height="18" fill="#4caf50"/><rect x="940" y="455" width="2" height="18" fill="#ff9800"/><rect x="940" y="473" width="2" height="18" fill="#2196f3"/><rect x="942" y="455" width="3" height="18" fill="#2196f3"/><rect x="942" y="473" width="3" height="18" fill="#ff9800"/><rect x="945" y="455" width="2" height="18" fill="#ff9800"/><rect x="945" y="473" width="2" height="18" fill="#2196f3"/><rect x="947" y="455" width="2" height="18" fill="#f44336"/><rect x="947" y="473" width="2" height="18" fill="#4caf50"/><rect x="949" y="455" width="2" height="18" fill="#f44336"/><rect x="949" y="473" width="2" height="18" fill="#4caf50"/><rect x="951" y="455" width="2" height="18" fill="#f44336"/><rect x="951" y="473" width="2" height="18" fill="#4caf50"/><rect x="953" y="455" width="2" height="18" fill="#f44336"/><rect x="953" y="473" width="2" height="18" fill="#4caf50"/><rect x="955" y="455" width="2" height="18" fill="#ff9800"/><rect x="955" y="473" width="2" height="18" fill="#2196f3"/><rect x="957" y="455" width="2" height="18" fill="#f44336"/><rect x="957" y="473" width="2" height="18" fill="#4caf50"/><rect x="959" y="455" width="2" height="18" fill="#4caf50"/><rect x="959" y="473" width="2" height="18" fill="#f44336"/><rect x="961" y="455" width="2" height="18" fill="#ff9800"/><rect x="961" y="473" width="2" height="18" fill="#2196f3"/><rect x="963" y="455" width="2" height="18" fill="#f44336"/><rect x="963" y="473" width="2" height="18" fill="#4caf50"/><rect x="965" y="455" width="2" height="18" fill="#2196f3"/><rect x="965" y="473" width="2" height="18" fill="#ff9800"/><rect x="967" y="455" width="2" height="18" fill="#2196f3"/><rect x="967" y="473" width="2" height="18" fill="#ff9800"/><rect x="969" y="455" width="3" height="18" fill="#ff9800"/><rect x="969" y="473" width="3" height="18" fill="#2196f3"/><rect x="972" y="455" width="2" height="18" fill="#2196f3"/><rect x="972" y="473" width="2" height="18" fill="#ff9800"/><rect x="974" y="455" width="2" height="18" fill="#4caf50"/><rect x="974" y="473" width="2" height="18" fill="#f44336"/><rect x="976" y="455" width="2" height="18" fill="#2196f3"/><rect x="976" y="473" width="2" height="18" fill="#ff9800"/><rect x="978" y="455" width="2" height="18" fill="#f44336"/><rect x="978" y="473" width="2" height="18" fill="#4caf50"/><rect x="980" y="455" width="2" height="18" fill="#ff9800"/><rect x="980" y="473" width="2" height="18" fill="#2196f3"/><rect x="982" y="455" width="2" height="18" fill="#4caf50"/><rect x="982" y="473" width="2" height="18" fill="#f44336"/><rect x="984" y="455" width="2" height="18" fill="#f44336"/><rect x="984" y="473" width="2" height="18" fill="#4caf50"/><rect x="986" y="455" width="2" height="18" fill="#4caf50"/><rect x="986" y="473" width="2" height="18" fill="#f44336"/><rect x="988" y="455" width="2" height="18" fill="#4caf50"/><rect x="988" y="473" width="2" height="18" fill="#f44336"/><rect x="990" y="455" width="2" height="18" fill="#4caf50"/><rect x="990" y="473" width="2" height="18" fill="#f44336"/><rect x="992" y="455" width="2" height="18" fill="#4caf50"/><rect x="992" y="473" width="2" height="18" fill="#f44336"/><rect x="994" y="455" width="2" height="18" fill="#f44336"/><rect x="994" y="473" width="2" height="18" fill="#4caf50"/><rect x="996" y="455" width="3" height="18" fill="#f44336"/><rect x="996" y="473" width="3" height="18" fill="#4caf50"/><rect x="999" y="455" width="2" height="18" fill="#f44336"/><rect x="999" y="473" width="2" height="18" fill="#4caf50"/><rect x="1001" y="455" width="2" height="18" fill="#ff9800"/><rect x="1001" y="473" width="2" height="18" fill="#2196f3"/><rect x="1003" y="455" width="2" height="18" fill="#2196f3"/><rect x="1003" y="473" width="2" height="18" fill="#ff9800"/><rect x="1005" y="455" width="2" height="18" fill="#ff9800"/><rect x="1005" y="473" width="2" height="18" fill="#2196f3"/><rect x="1007" y="455" width="2" height="18" fill="#ff9800"/><rect x="1007" y="473" width="2" height="18" fill="#2196f3"/><rect x="1009" y="455" width="2" height="18" fill="#f44336"/><rect x="1009" y="473" width="2" height="18" fill="#4caf50"/><rect x="1011" y="455" width="2" height="18" fill="#f44336"/><rect x="1011" y="473" width="2" height="18" fill="#4caf50"/><rect x="1013" y="455" width="2" height="18" fill="#ff9800"/><rect x="1013" y="473" width="2" height="18" fill="#2196f3"/><rect x="1015" y="455" width="2" height="18" fill="#2196f3"/><rect x="1015" y="473" width="2" height="18" fill="#ff9800"/><rect x="1017" y="455" width="2" height="18" fill="#2196f3"/><rect x="1017" y="473" width="2" height="18" fill="#ff9800"/><rect x="1019" y="455" width="2" height="18" fill="#4caf50"/><rect x="1019" y="473" width="2" height="18" fill="#f44336"/><rect x="1021" y="455" width="2" height="18" fill="#4caf50"/><rect x="1021" y="473" width="2" height="18" fill="#f44336"/><rect x="1023" y="455" width="3" height="18" fill="#ff9800"/><rect x="1023" y="473" width="3" height="18" fill="#2196f3"/><rect x="1026" y="455" width="2" height="18" fill="#4caf50"/><rect x="1026" y="473" width="2" height="18" fill="#f44336"/><rect x="1028" y="455" width="2" height="18" fill="#4caf50"/><rect x="1028" y="473" width="2" height="18" fill="#f44336"/><rect x="1030" y="455" width="2" height="18" fill="#4caf50"/><rect x="1030" y="473" width="2" height="18" fill="#f44336"/><rect x="1032" y="455" width="2" height="18" fill="#f44336"/><rect x="1032" y="473" width="2" height="18" fill="#4caf50"/><rect x="1034" y="455" width="2" height="18" fill="#ff9800"/><rect x="1034" y="473" width="2" height="18" fill="#2196f3"/><rect x="1036" y="455" width="2" height="18" fill="#2196f3"/><rect x="1036" y="473" width="2" height="18" fill="#ff9800"/><rect x="1038" y="455" width="2" height="18" fill="#f44336"/><rect x="1038" y="473" width="2" height="18" fill="#4caf50"/><rect x="1040" y="455" width="2" height="18" fill="#4caf50"/><rect x="1040" y="473" width="2" height="18" fill="#f44336"/><rect x="1042" y="455" width="2" height="18" fill="#ff9800"/><rect x="1042" y="473" width="2" height="18" fill="#2196f3"/><rect x="1044" y="455" width="2" height="18" fill="#4caf50"/><rect x="1044" y="473" width="2" height="18" fill="#f44336"/><rect x="1046" y="455" width="2" height="18" fill="#f44336"/><rect x="1046" y="473" width="2" height="18" fill="#4caf50"/><rect x="1048" y="455" width="2" height="18" fill="#ff9800"/><rect x="1048" y="473" width="2" height="18" fill="#2196f3"/><rect x="1050" y="455" width="3" height="18" fill="#ff9800"/><rect x="1050" y="473" width="3" height="18" fill="#2196f3"/><rect x="1053" y="455" width="2" height="18" fill="#f44336"/><rect x="1053" y="473" width="2" height="18" fill="#4caf50"/><rect x="1055" y="455" width="2" height="18" fill="#f44336"/><rect x="1055" y="473" width="2" height="18" fill="#4caf50"/><rect x="1057" y="455" width="2" height="18" fill="#2196f3"/><rect x="1057" y="473" width="2" height="18" fill="#ff9800"/><rect x="1059" y="455" width="2" height="18" fill="#4caf50"/><rect x="1059" y="473" width="2" height="18" fill="#f44336"/><rect x="1061" y="455" width="2" height="18" fill="#ff9800"/><rect x="1061" y="473" width="2" height="18" fill="#2196f3"/><rect x="1063" y="455" width="2" height="18" fill="#f44336"/><rect x="1063" y="473" width="2" height="18" fill="#4caf50"/><rect x="1065" y="455" width="2" height="18" fill="#f44336"/><rect x="1065" y="473" width="2" height="18" fill="#4caf50"/><rect x="1067" y="455" width="2" height="18" fill="#4caf50"/><rect x="1067" y="473" width="2" height="18" fill="#f44336"/><rect x="1069" y="455" width="2" height="18" fill="#4caf50"/><rect x="1069" y="473" width="2" height="18" fill="#f44336"/><rect x="1071" y="455" width="2" height="18" fill="#ff9800"/><rect x="1071" y="473" width="2" height="18" fill="#2196f3"/><rect x="1073" y="455" width="2" height="18" fill="#ff9800"/><rect x="1073" y="473" width="2" height="18" fill="#2196f3"/><rect x="1075" y="455" width="2" height="18" fill="#f44336"/><rect x="1075" y="473" width="2" height="18" fill="#4caf50"/><rect x="1077" y="455" width="3" height="18" fill="#4caf50"/><rect x="1077" y="473" width="3" height="18" fill="#f44336"/><rect x="1080" y="455" width="2" height="18" fill="#4caf50"/><rect x="1080" y="473" width="2" height="18" fill="#f44336"/><rect x="1082" y="455" width="2" height="18" fill="#2196f3"/><rect x="1082" y="473" width="2" height="18" fill="#ff9800"/><rect x="1084" y="455" width="2" height="18" fill="#4caf50"/><rect x="1084" y="473" width="2" height="18" fill="#f44336"/><rect x="1086" y="455" width="2" height="18" fill="#4caf50"/><rect x="1086" y="473" width="2" height="18" fill="#f44336"/><rect x="1088" y="455" width="2" height="18" fill="#f44336"/><rect x="1088" y="473" width="2" height="18" fill="#4caf50"/><rect x="1090" y="455" width="2" height="18" fill="#f44336"/><rect x="1090" y="473" width="2" height="18" fill="#4caf50"/><rect x="1092" y="455" width="2" height="18" fill="#ff9800"/><rect x="1092" y="473" width="2" height="18" fill="#2196f3"/><rect x="1094" y="455" width="2" height="18" fill="#4caf50"/><rect x="1094" y="473" width="2" height="18" fill="#f44336"/><rect x="1096" y="455" width="2" height="18" fill="#f44336"/><rect x="1096" y="473" width="2" height="18" fill="#4caf50"/><rect x="1098" y="455" width="2" height="18" fill="#2196f3"/><rect x="1098" y="473" width="2" height="18" fill="#ff9800"/><rect x="1100" y="455" width="2" height="18" fill="#4caf50"/><rect x="1100" y="473" width="2" height="18" fill="#f44336"/><rect x="1102" y="455" width="2" height="18" fill="#4caf50"/><rect x="1102" y="473" width="2" height="18" fill="#f44336"/><rect x="1104" y="455" width="2" height="18" fill="#ff9800"/><rect x="1104" y="473" width="2" height="18" fill="#2196f3"/><rect x="1106" y="455" width="3" height="18" fill="#ff9800"/><rect x="1106" y="473" width="3" height="18" fill="#2196f3"/><rect x="1109" y="455" width="2" height="18" fill="#2196f3"/><rect x="1109" y="473" width="2" height="18" fill="#ff9800"/><rect x="1111" y="455" width="2" height="18" fill="#ff9800"/><rect x="1111" y="473" width="2" height="18" fill="#2196f3"/><rect x="1113" y="455" width="2" height="18" fill="#4caf50"/><rect x="1113" y="473" width="2" height="18" fill="#f44336"/><rect x="1115" y="455" width="2" height="18" fill="#4caf50"/><rect x="1115" y="473" width="2" height="18" fill="#f44336"/><rect x="1117" y="455" width="2" height="18" fill="#4caf50"/><rect x="1117" y="473" width="2" height="18" fill="#f44336"/><rect x="1119" y="455" width="2" height="18" fill="#2196f3"/><rect x="1119" y="473" width="2" height="18" fill="#ff9800"/><rect x="1121" y="455" width="2" height="18" fill="#f44336"/><rect x="1121" y="473" width="2" height="18" fill="#4caf50"/><rect x="1123" y="455" width="2" height="18" fill="#2196f3"/><rect x="1123" y="473" width="2" height="18" fill="#ff9800"/><rect x="1125" y="455" width="2" height="18" fill="#ff9800"/><rect x="1125" y="473" width="2" height="18" fill="#2196f3"/><rect x="1127" y="455" width="2" height="18" fill="#f44336"/><rect x="1127" y="473" width="2" height="18" fill="#4caf50"/><rect x="1129" y="455" width="2" height="18" fill="#2196f3"/><rect x="1129" y="473" width="2" height="18" fill="#ff9800"/><rect x="1131" y="455" width="2" height="18" fill="#2196f3"/><rect x="1131" y="473" width="2" height="18" fill="#ff9800"/><rect x="1133" y="455" width="3" height="18" fill="#ff9800"/><rect x="1133" y="473" width="3" height="18" fill="#2196f3"/><rect x="1136" y="455" width="2" height="18" fill="#4caf50"/><rect x="1136" y="473" width="2" height="18" fill="#f44336"/><rect x="1138" y="455" width="2" height="18" fill="#f44336"/><rect x="1138" y="473" width="2" height="18" fill="#4caf50"/><rect x="1140" y="455" width="2" height="18" fill="#f44336"/><rect x="1140" y="473" width="2" height="18" fill="#4caf50"/><rect x="1142" y="455" width="2" height="18" fill="#4caf50"/><rect x="1142" y="473" width="2" height="18" fill="#f44336"/><rect x="1144" y="455" width="2" height="18" fill="#f44336"/><rect x="1144" y="473" width="2" height="18" fill="#4caf50"/><rect x="1146" y="455" width="2" height="18" fill="#ff9800"/><rect x="1146" y="473" width="2" height="18" fill="#2196f3"/><rect x="1148" y="455" width="2" height="18" fill="#f44336"/><rect x="1148" y="473" width="2" height="18" fill="#4caf50"/><rect x="1150" y="455" width="2" height="18" fill="#2196f3"/><rect x="1150" y="473" width="2" height="18" fill="#ff9800"/><rect x="1152" y="455" width="2" height="18" fill="#4caf50"/><rect x="1152" y="473" width="2" height="18" fill="#f44336"/><rect x="1154" y="455" width="2" height="18" fill="#ff9800"/><rect x="1154" y="473" width="2" height="18" fill="#2196f3"/><rect x="1156" y="455" width="2" height="18" fill="#f44336"/><rect x="1156" y="473" width="2" height="18" fill="#4caf50"/><rect x="1158" y="455" width="2" height="18" fill="#4caf50"/><rect x="1158" y="473" width="2" height="18" fill="#f44336"/><rect x="1160" y="455" width="3" height="18" fill="#ff9800"/><rect x="1160" y="473" width="3" height="18" fill="#2196f3"/><rect x="1163" y="455" width="2" height="18" fill="#f44336"/><rect x="1163" y="473" width="2" height="18" fill="#4caf50"/><rect x="1165" y="455" width="2" height="18" fill="#f44336"/><rect x="1165" y="473" width="2" height="18" fill="#4caf50"/><rect x="1167" y="455" width="2" height="18" fill="#ff9800"/><rect x="1167" y="473" width="2" height="18" fill="#2196f3"/><rect x="1169" y="455" width="2" height="18" fill="#f44336"/><rect x="1169" y="473" width="2" height="18" fill="#4caf50"/><rect x="1171" y="455" width="2" height="18" fill="#4caf50"/><rect x="1171" y="473" width="2" height="18" fill="#f44336"/><rect x="1173" y="455" width="2" height="18" fill="#2196f3"/><rect x="1173" y="473" width="2" height="18" fill="#ff9800"/><rect x="1175" y="455" width="2" height="18" fill="#f44336"/><rect x="1175" y="473" width="2" height="18" fill="#4caf50"/><rect x="1177" y="455" width="2" height="18" fill="#ff9800"/><rect x="1177" y="473" width="2" height="18" fill="#2196f3"/><rect x="1179" y="455" width="2" height="18" fill="#ff9800"/><rect x="1179" y="473" width="2" height="18" fill="#2196f3"/><rect x="1181" y="455" width="2" height="18" fill="#4caf50"/><rect x="1181" y="473" width="2" height="18" fill="#f44336"/><rect x="1183" y="455" width="2" height="18" fill="#4caf50"/><rect x="1183" y="473" width="2" height="18" fill="#f44336"/><rect x="1185" y="455" width="2" height="18" fill="#4caf50"/><rect x="1185" y="473" width="2" height="18" fill="#f44336"/><rect x="1187" y="455" width="3" height="18" fill="#ff9800"/><rect x="1187" y="473" width="3" height="18" fill="#2196f3"/><rect x="1190" y="455" width="2" height="18" fill="#f44336"/><rect x="1190" y="473" width="2" height="18" fill="#4caf50"/><rect x="1192" y="455" width="2" height="18" fill="#f44336"/><rect x="1192" y="473" width="2" height="18" fill="#4caf50"/><rect x="1194" y="455" width="2" height="18" fill="#f44336"/><rect x="1194" y="473" width="2" height="18" fill="#4caf50"/><rect x="1196" y="455" width="2" height="18" fill="#f44336"/><rect x="1196" y="473" width="2" height="18" fill="#4caf50"/><rect x="1198" y="455" width="2" height="18" fill="#ff9800"/><rect x="1198" y="473" width="2" height="18" fill="#2196f3"/><rect x="1200" y="455" width="2" height="18" fill="#4caf50"/><rect x="1200" y="473" width="2" height="18" fill="#f44336"/><rect x="1202" y="455" width="2" height="18" fill="#4caf50"/><rect x="1202" y="473" width="2" height="18" fill="#f44336"/><rect x="1204" y="455" width="2" height="18" fill="#2196f3"/><rect x="1204" y="473" width="2" height="18" fill="#ff9800"/><rect x="1206" y="455" width="2" height="18" fill="#4caf50"/><rect x="1206" y="473" width="2" height="18" fill="#f44336"/><rect x="1208" y="455" width="2" height="18" fill="#4caf50"/><rect x="1208" y="473" width="2" height="18" fill="#f44336"/><rect x="1210" y="455" width="2" height="18" fill="#ff9800"/><rect x="1210" y="473" width="2" height="18" fill="#2196f3"/><rect x="1212" y="455" width="2" height="18" fill="#f44336"/><rect x="1212" y="473" width="2" height="18" fill="#4caf50"/><rect x="1214" y="455" width="3" height="18" fill="#f44336"/><rect x="1214" y="473" width="3" height="18" fill="#4caf50"/><rect x="1217" y="455" width="2" height="18" fill="#f44336"/><rect x="1217" y="473" width="2" height="18" fill="#4caf50"/><rect x="1219" y="455" width="2" height="18" fill="#2196f3"/><rect x="1219" y="473" width="2" height="18" fill="#ff9800"/><rect x="1221" y="455" width="2" height="18" fill="#4caf50"/><rect x="1221" y="473" width="2" height="18" fill="#f44336"/><rect x="1223" y="455" width="2" height="18" fill="#f44336"/><rect x="1223" y="473" width="2" height="18" fill="#4caf50"/><rect x="1225" y="455" width="2" height="18" fill="#2196f3"/><rect x="1225" y="473" width="2" height="18" fill="#ff9800"/><rect x="1227" y="455" width="2" height="18" fill="#f44336"/><rect x="1227" y="473" width="2" height="18" fill="#4caf50"/><rect x="1229" y="455" width="2" height="18" fill="#ff9800"/><rect x="1229" y="473" width="2" height="18" fill="#2196f3"/><rect x="1231" y="455" width="2" height="18" fill="#2196f3"/><rect x="1231" y="473" width="2" height="18" fill="#ff9800"/><rect x="1233" y="455" width="2" height="18" fill="#ff9800"/><rect x="1233" y="473" width="2" height="18" fill="#2196f3"/><rect x="1235" y="455" width="2" height="18" fill="#4caf50"/><rect x="1235" y="473" width="2" height="18" fill="#f44336"/><rect x="1237" y="455" width="2" height="18" fill="#f44336"/><rect x="1237" y="473" width="2" height="18" fill="#4caf50"/><rect x="1239" y="455" width="2" height="18" fill="#ff9800"/><rect x="1239" y="473" width="2" height="18" fill="#2196f3"/><rect x="1241" y="455" width="3" height="18" fill="#4caf50"/><rect x="1241" y="473" width="3" height="18" fill="#f44336"/><rect x="1244" y="455" width="2" height="18" fill="#f44336"/><rect x="1244" y="473" width="2" height="18" fill="#4caf50"/><rect x="1246" y="455" width="2" height="18" fill="#ff9800"/><rect x="1246" y="473" width="2" height="18" fill="#2196f3"/><rect x="1248" y="455" width="2" height="18" fill="#ff9800"/><rect x="1248" y="473" width="2" height="18" fill="#2196f3"/><rect x="1250" y="455" width="2" height="18" fill="#4caf50"/><rect x="1250" y="473" width="2" height="18" fill="#f44336"/><rect x="1252" y="455" width="2" height="18" fill="#ff9800"/><rect x="1252" y="473" width="2" height="18" fill="#2196f3"/><rect x="1254" y="455" width="2" height="18" fill="#f44336"/><rect x="1254" y="473" width="2" height="18" fill="#4caf50"/><rect x="1256" y="455" width="2" height="18" fill="#ff9800"/><rect x="1256" y="473" width="2" height="18" fill="#2196f3"/><rect x="1258" y="455" width="2" height="18" fill="#4caf50"/><rect x="1258" y="473" width="2" height="18" fill="#f44336"/><rect x="1260" y="455" width="2" height="18" fill="#4caf50"/><rect x="1260" y="473" width="2" height="18" fill="#f44336"/><rect x="1262" y="455" width="2" height="18" fill="#f44336"/><rect x="1262" y="473" width="2" height="18" fill="#4caf50"/><rect x="1264" y="455" width="2" height="18" fill="#2196f3"/><rect x="1264" y="473" width="2" height="18" fill="#ff9800"/><rect x="1266" y="455" width="2" height="18" fill="#2196f3"/><rect x="1266" y="473" width="2" height="18" fill="#ff9800"/><rect x="1268" y="455" width="3" height="18" fill="#4caf50"/><rect x="1268" y="473" width="3" height="18" fill="#f44336"/><rect x="1271" y="455" width="2" height="18" fill="#f44336"/><rect x="1271" y="473" width="2" height="18" fill="#4caf50"/><rect x="1273" y="455" width="2" height="18" fill="#ff9800"/><rect x="1273" y="473" width="2" height="18" fill="#2196f3"/><rect x="1275" y="455" width="2" height="18" fill="#4caf50"/><rect x="1275" y="473" width="2" height="18" fill="#f44336"/><rect x="1277" y="455" width="2" height="18" fill="#ff9800"/><rect x="1277" y="473" width="2" height="18" fill="#2196f3"/><rect x="1279" y="455" width="2" height="18" fill="#f44336"/><rect x="1279" y="473" width="2" height="18" fill="#4caf50"/><rect x="1281" y="455" width="2" height="18" fill="#ff9800"/><rect x="1281" y="473" width="2" height="18" fill="#2196f3"/><rect x="1283" y="455" width="2" height="18" fill="#4caf50"/><rect x="1283" y="473" width="2" height="18" fill="#f44336"/><rect x="1285" y="455" width="2" height="18" fill="#ff9800"/><rect x="1285" y="473" width="2" height="18" fill="#2196f3"/><rect x="1287" y="455" width="2" height="18" fill="#4caf50"/><rect x="1287" y="473" width="2" height="18" fill="#f44336"/></svg></div>
<div class="a" style="left:10px;top:401px;width:291px;height:28.5px;background:rgba(255,255,255,0.8);border-radius:4px;box-shadow:0 1px 3px rgba(0,0,0,0.2)"></div>
<svg class="a" style="left:0;top:0" width="1300" height="450"><circle cx="16.2" cy="212.1" r="1.5" fill="#1a1a1a"/><circle cx="16.2" cy="216.45" r="1.5" fill="#1a1a1a"/><circle cx="16.2" cy="220.8" r="1.5" fill="#1a1a1a"/><circle cx="20.9" cy="212.1" r="1.5" fill="#1a1a1a"/><circle cx="20.9" cy="216.45" r="1.5" fill="#1a1a1a"/><circle cx="20.9" cy="220.8" r="1.5" fill="#1a1a1a"/><path d="M36.2 211.8L45.2 220.8M45.2 211.8L36.2 220.8" stroke="#555" stroke-width="1.4"/><circle cx="136" cy="211.8" r="1.45" fill="#666"/><circle cx="136" cy="216.6" r="1.45" fill="#666"/><circle cx="136" cy="221.4" r="1.45" fill="#666"/></svg>
<div class="t" style="left:54.16px;top:208px;font-size:15.2px;color:#1f1f1f;transform:scaleX(1.0732);transform-origin:0 0;">merlin.gtf</div>
<svg class="a" style="left:0;top:0" width="1300" height="450"><circle cx="16.2" cy="411.1" r="1.5" fill="#1a1a1a"/><circle cx="16.2" cy="415.45" r="1.5" fill="#1a1a1a"/><circle cx="16.2" cy="419.8" r="1.5" fill="#1a1a1a"/><circle cx="20.9" cy="411.1" r="1.5" fill="#1a1a1a"/><circle cx="20.9" cy="415.45" r="1.5" fill="#1a1a1a"/><circle cx="20.9" cy="419.8" r="1.5" fill="#1a1a1a"/><path d="M36.2 410.8L45.2 419.8M45.2 410.8L36.2 419.8" stroke="#555" stroke-width="1.4"/><circle cx="287" cy="410.8" r="1.45" fill="#666"/><circle cx="287" cy="415.6" r="1.45" fill="#666"/><circle cx="287" cy="420.4" r="1.45" fill="#666"/></svg>
<div class="t" style="left:54.05px;top:406px;font-size:15.8px;color:#1f1f1f;transform:scaleX(0.9854);transform-origin:0 0;">Reference sequence (merlin.fa)</div>
</body></html>
